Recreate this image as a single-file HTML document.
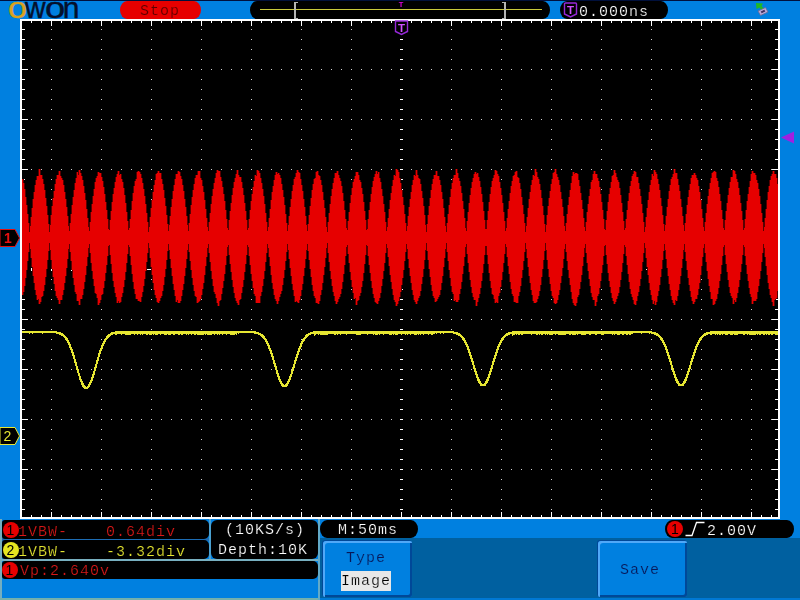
<!DOCTYPE html>
<html><head><meta charset="utf-8"><title>OWON</title>
<style>
html,body{margin:0;padding:0;}
body{width:800px;height:600px;overflow:hidden;background:#0080e0;position:relative;font-family:"Liberation Mono",monospace;font-size:15px;letter-spacing:1px;line-height:16px;}
.a{position:absolute;}
.t{position:absolute;white-space:pre;will-change:transform;-webkit-text-stroke:0.22px #000;}
.lg{position:absolute;left:0;top:-12px;white-space:nowrap;font-family:"Liberation Sans",sans-serif;font-size:30px;line-height:40px;letter-spacing:0;color:#04102c;-webkit-text-stroke:0.4px #04102c;}
.lg span{display:inline-block;transform-origin:0 0;}
.pill{position:absolute;background:#000;border-radius:7px/9px;}
.btn{position:absolute;background:#0080e0;border-radius:3px 2px 2px 2px;box-shadow:inset 2px 2px 0 #50a8f8, inset -2px -2px 0 #004898, -1px -1px 0 #004898;}
.circ{position:absolute;width:16px;height:16px;border-radius:8px;color:#000;font-family:"Liberation Sans",sans-serif;font-size:14px;line-height:16px;text-align:center;letter-spacing:0;}
</style></head><body>
<div class="a" style="left:0;top:0;width:800px;height:1px;background:#00103c"></div>
<div class="a" style="left:0;top:519px;width:2px;height:81px;background:#74aec0"></div>
<!-- logo -->
<div class="lg"><span style="margin-left:8px;width:17.3px;color:#d9a21e;-webkit-text-stroke:0.4px #d9a21e;transform:scaleX(1.14)">o</span><span style="width:20.2px;transform:scaleX(0.95)">w</span><span style="width:17.2px;transform:scaleX(1.21)">o</span><span style="width:16px">n</span></div>
<!-- stop pill -->
<div class="a" style="left:120px;top:1px;width:81px;height:18px;border-radius:7px/9px;background:#e60000"></div>
<div class="t" style="left:139.5px;top:4px;color:#5a0000;-webkit-text-stroke:0.22px #e60000">Stop</div>
<!-- memory bar -->
<div class="pill" style="left:250px;top:1px;width:300px;height:18px"></div>
<div class="a" style="left:260px;top:9px;width:282px;height:1px;background:#c8c83c"></div>
<div class="a" style="left:294px;top:2px;width:2px;height:17px;background:#b4b4b4"></div>
<div class="a" style="left:296px;top:2px;width:2px;height:1px;background:#b4b4b4"></div>
<div class="a" style="left:296px;top:18px;width:2px;height:1px;background:#b4b4b4"></div>
<div class="a" style="left:504px;top:2px;width:2px;height:17px;background:#b4b4b4"></div>
<div class="a" style="left:502px;top:2px;width:2px;height:1px;background:#b4b4b4"></div>
<div class="a" style="left:502px;top:18px;width:2px;height:1px;background:#b4b4b4"></div>
<!-- time offset pill -->
<div class="pill" style="left:560px;top:1px;width:108px;height:18px"></div>
<div class="t" style="left:579px;top:5px;color:#fff">0.000ns</div>
<!-- plot -->
<div class="a" style="left:20px;top:19px;width:756px;height:496px;border:2px solid #fff;background:#000"></div>
<svg class="a" style="left:0;top:0" width="800" height="600" viewBox="0 0 800 600" shape-rendering="crispEdges">
<rect x="51" y="29" width="1" height="1" fill="#d0d0d0"/>
<rect x="51" y="39" width="1" height="1" fill="#d0d0d0"/>
<rect x="51" y="49" width="1" height="1" fill="#d0d0d0"/>
<rect x="51" y="59" width="1" height="1" fill="#d0d0d0"/>
<rect x="51" y="69" width="1" height="1" fill="#d0d0d0"/>
<rect x="51" y="79" width="1" height="1" fill="#d0d0d0"/>
<rect x="51" y="89" width="1" height="1" fill="#d0d0d0"/>
<rect x="51" y="99" width="1" height="1" fill="#d0d0d0"/>
<rect x="51" y="109" width="1" height="1" fill="#d0d0d0"/>
<rect x="51" y="119" width="1" height="1" fill="#d0d0d0"/>
<rect x="51" y="129" width="1" height="1" fill="#d0d0d0"/>
<rect x="51" y="139" width="1" height="1" fill="#d0d0d0"/>
<rect x="51" y="149" width="1" height="1" fill="#d0d0d0"/>
<rect x="51" y="159" width="1" height="1" fill="#d0d0d0"/>
<rect x="51" y="169" width="1" height="1" fill="#d0d0d0"/>
<rect x="51" y="179" width="1" height="1" fill="#d0d0d0"/>
<rect x="51" y="189" width="1" height="1" fill="#d0d0d0"/>
<rect x="51" y="199" width="1" height="1" fill="#d0d0d0"/>
<rect x="51" y="209" width="1" height="1" fill="#d0d0d0"/>
<rect x="51" y="219" width="1" height="1" fill="#d0d0d0"/>
<rect x="51" y="229" width="1" height="1" fill="#d0d0d0"/>
<rect x="51" y="239" width="1" height="1" fill="#d0d0d0"/>
<rect x="51" y="249" width="1" height="1" fill="#d0d0d0"/>
<rect x="51" y="259" width="1" height="1" fill="#d0d0d0"/>
<rect x="51" y="269" width="1" height="1" fill="#d0d0d0"/>
<rect x="51" y="279" width="1" height="1" fill="#d0d0d0"/>
<rect x="51" y="289" width="1" height="1" fill="#d0d0d0"/>
<rect x="51" y="299" width="1" height="1" fill="#d0d0d0"/>
<rect x="51" y="309" width="1" height="1" fill="#d0d0d0"/>
<rect x="51" y="319" width="1" height="1" fill="#d0d0d0"/>
<rect x="51" y="329" width="1" height="1" fill="#d0d0d0"/>
<rect x="51" y="339" width="1" height="1" fill="#d0d0d0"/>
<rect x="51" y="349" width="1" height="1" fill="#d0d0d0"/>
<rect x="51" y="359" width="1" height="1" fill="#d0d0d0"/>
<rect x="51" y="369" width="1" height="1" fill="#d0d0d0"/>
<rect x="51" y="379" width="1" height="1" fill="#d0d0d0"/>
<rect x="51" y="389" width="1" height="1" fill="#d0d0d0"/>
<rect x="51" y="399" width="1" height="1" fill="#d0d0d0"/>
<rect x="51" y="409" width="1" height="1" fill="#d0d0d0"/>
<rect x="51" y="419" width="1" height="1" fill="#d0d0d0"/>
<rect x="51" y="429" width="1" height="1" fill="#d0d0d0"/>
<rect x="51" y="439" width="1" height="1" fill="#d0d0d0"/>
<rect x="51" y="449" width="1" height="1" fill="#d0d0d0"/>
<rect x="51" y="459" width="1" height="1" fill="#d0d0d0"/>
<rect x="51" y="469" width="1" height="1" fill="#d0d0d0"/>
<rect x="51" y="479" width="1" height="1" fill="#d0d0d0"/>
<rect x="51" y="489" width="1" height="1" fill="#d0d0d0"/>
<rect x="51" y="499" width="1" height="1" fill="#d0d0d0"/>
<rect x="51" y="509" width="1" height="1" fill="#d0d0d0"/>
<rect x="101" y="29" width="1" height="1" fill="#d0d0d0"/>
<rect x="101" y="39" width="1" height="1" fill="#d0d0d0"/>
<rect x="101" y="49" width="1" height="1" fill="#d0d0d0"/>
<rect x="101" y="59" width="1" height="1" fill="#d0d0d0"/>
<rect x="101" y="69" width="1" height="1" fill="#d0d0d0"/>
<rect x="101" y="79" width="1" height="1" fill="#d0d0d0"/>
<rect x="101" y="89" width="1" height="1" fill="#d0d0d0"/>
<rect x="101" y="99" width="1" height="1" fill="#d0d0d0"/>
<rect x="101" y="109" width="1" height="1" fill="#d0d0d0"/>
<rect x="101" y="119" width="1" height="1" fill="#d0d0d0"/>
<rect x="101" y="129" width="1" height="1" fill="#d0d0d0"/>
<rect x="101" y="139" width="1" height="1" fill="#d0d0d0"/>
<rect x="101" y="149" width="1" height="1" fill="#d0d0d0"/>
<rect x="101" y="159" width="1" height="1" fill="#d0d0d0"/>
<rect x="101" y="169" width="1" height="1" fill="#d0d0d0"/>
<rect x="101" y="179" width="1" height="1" fill="#d0d0d0"/>
<rect x="101" y="189" width="1" height="1" fill="#d0d0d0"/>
<rect x="101" y="199" width="1" height="1" fill="#d0d0d0"/>
<rect x="101" y="209" width="1" height="1" fill="#d0d0d0"/>
<rect x="101" y="219" width="1" height="1" fill="#d0d0d0"/>
<rect x="101" y="229" width="1" height="1" fill="#d0d0d0"/>
<rect x="101" y="239" width="1" height="1" fill="#d0d0d0"/>
<rect x="101" y="249" width="1" height="1" fill="#d0d0d0"/>
<rect x="101" y="259" width="1" height="1" fill="#d0d0d0"/>
<rect x="101" y="269" width="1" height="1" fill="#d0d0d0"/>
<rect x="101" y="279" width="1" height="1" fill="#d0d0d0"/>
<rect x="101" y="289" width="1" height="1" fill="#d0d0d0"/>
<rect x="101" y="299" width="1" height="1" fill="#d0d0d0"/>
<rect x="101" y="309" width="1" height="1" fill="#d0d0d0"/>
<rect x="101" y="319" width="1" height="1" fill="#d0d0d0"/>
<rect x="101" y="329" width="1" height="1" fill="#d0d0d0"/>
<rect x="101" y="339" width="1" height="1" fill="#d0d0d0"/>
<rect x="101" y="349" width="1" height="1" fill="#d0d0d0"/>
<rect x="101" y="359" width="1" height="1" fill="#d0d0d0"/>
<rect x="101" y="369" width="1" height="1" fill="#d0d0d0"/>
<rect x="101" y="379" width="1" height="1" fill="#d0d0d0"/>
<rect x="101" y="389" width="1" height="1" fill="#d0d0d0"/>
<rect x="101" y="399" width="1" height="1" fill="#d0d0d0"/>
<rect x="101" y="409" width="1" height="1" fill="#d0d0d0"/>
<rect x="101" y="419" width="1" height="1" fill="#d0d0d0"/>
<rect x="101" y="429" width="1" height="1" fill="#d0d0d0"/>
<rect x="101" y="439" width="1" height="1" fill="#d0d0d0"/>
<rect x="101" y="449" width="1" height="1" fill="#d0d0d0"/>
<rect x="101" y="459" width="1" height="1" fill="#d0d0d0"/>
<rect x="101" y="469" width="1" height="1" fill="#d0d0d0"/>
<rect x="101" y="479" width="1" height="1" fill="#d0d0d0"/>
<rect x="101" y="489" width="1" height="1" fill="#d0d0d0"/>
<rect x="101" y="499" width="1" height="1" fill="#d0d0d0"/>
<rect x="101" y="509" width="1" height="1" fill="#d0d0d0"/>
<rect x="151" y="29" width="1" height="1" fill="#d0d0d0"/>
<rect x="151" y="39" width="1" height="1" fill="#d0d0d0"/>
<rect x="151" y="49" width="1" height="1" fill="#d0d0d0"/>
<rect x="151" y="59" width="1" height="1" fill="#d0d0d0"/>
<rect x="151" y="69" width="1" height="1" fill="#d0d0d0"/>
<rect x="151" y="79" width="1" height="1" fill="#d0d0d0"/>
<rect x="151" y="89" width="1" height="1" fill="#d0d0d0"/>
<rect x="151" y="99" width="1" height="1" fill="#d0d0d0"/>
<rect x="151" y="109" width="1" height="1" fill="#d0d0d0"/>
<rect x="151" y="119" width="1" height="1" fill="#d0d0d0"/>
<rect x="151" y="129" width="1" height="1" fill="#d0d0d0"/>
<rect x="151" y="139" width="1" height="1" fill="#d0d0d0"/>
<rect x="151" y="149" width="1" height="1" fill="#d0d0d0"/>
<rect x="151" y="159" width="1" height="1" fill="#d0d0d0"/>
<rect x="151" y="169" width="1" height="1" fill="#d0d0d0"/>
<rect x="151" y="179" width="1" height="1" fill="#d0d0d0"/>
<rect x="151" y="189" width="1" height="1" fill="#d0d0d0"/>
<rect x="151" y="199" width="1" height="1" fill="#d0d0d0"/>
<rect x="151" y="209" width="1" height="1" fill="#d0d0d0"/>
<rect x="151" y="219" width="1" height="1" fill="#d0d0d0"/>
<rect x="151" y="229" width="1" height="1" fill="#d0d0d0"/>
<rect x="151" y="239" width="1" height="1" fill="#d0d0d0"/>
<rect x="151" y="249" width="1" height="1" fill="#d0d0d0"/>
<rect x="151" y="259" width="1" height="1" fill="#d0d0d0"/>
<rect x="151" y="269" width="1" height="1" fill="#d0d0d0"/>
<rect x="151" y="279" width="1" height="1" fill="#d0d0d0"/>
<rect x="151" y="289" width="1" height="1" fill="#d0d0d0"/>
<rect x="151" y="299" width="1" height="1" fill="#d0d0d0"/>
<rect x="151" y="309" width="1" height="1" fill="#d0d0d0"/>
<rect x="151" y="319" width="1" height="1" fill="#d0d0d0"/>
<rect x="151" y="329" width="1" height="1" fill="#d0d0d0"/>
<rect x="151" y="339" width="1" height="1" fill="#d0d0d0"/>
<rect x="151" y="349" width="1" height="1" fill="#d0d0d0"/>
<rect x="151" y="359" width="1" height="1" fill="#d0d0d0"/>
<rect x="151" y="369" width="1" height="1" fill="#d0d0d0"/>
<rect x="151" y="379" width="1" height="1" fill="#d0d0d0"/>
<rect x="151" y="389" width="1" height="1" fill="#d0d0d0"/>
<rect x="151" y="399" width="1" height="1" fill="#d0d0d0"/>
<rect x="151" y="409" width="1" height="1" fill="#d0d0d0"/>
<rect x="151" y="419" width="1" height="1" fill="#d0d0d0"/>
<rect x="151" y="429" width="1" height="1" fill="#d0d0d0"/>
<rect x="151" y="439" width="1" height="1" fill="#d0d0d0"/>
<rect x="151" y="449" width="1" height="1" fill="#d0d0d0"/>
<rect x="151" y="459" width="1" height="1" fill="#d0d0d0"/>
<rect x="151" y="469" width="1" height="1" fill="#d0d0d0"/>
<rect x="151" y="479" width="1" height="1" fill="#d0d0d0"/>
<rect x="151" y="489" width="1" height="1" fill="#d0d0d0"/>
<rect x="151" y="499" width="1" height="1" fill="#d0d0d0"/>
<rect x="151" y="509" width="1" height="1" fill="#d0d0d0"/>
<rect x="201" y="29" width="1" height="1" fill="#d0d0d0"/>
<rect x="201" y="39" width="1" height="1" fill="#d0d0d0"/>
<rect x="201" y="49" width="1" height="1" fill="#d0d0d0"/>
<rect x="201" y="59" width="1" height="1" fill="#d0d0d0"/>
<rect x="201" y="69" width="1" height="1" fill="#d0d0d0"/>
<rect x="201" y="79" width="1" height="1" fill="#d0d0d0"/>
<rect x="201" y="89" width="1" height="1" fill="#d0d0d0"/>
<rect x="201" y="99" width="1" height="1" fill="#d0d0d0"/>
<rect x="201" y="109" width="1" height="1" fill="#d0d0d0"/>
<rect x="201" y="119" width="1" height="1" fill="#d0d0d0"/>
<rect x="201" y="129" width="1" height="1" fill="#d0d0d0"/>
<rect x="201" y="139" width="1" height="1" fill="#d0d0d0"/>
<rect x="201" y="149" width="1" height="1" fill="#d0d0d0"/>
<rect x="201" y="159" width="1" height="1" fill="#d0d0d0"/>
<rect x="201" y="169" width="1" height="1" fill="#d0d0d0"/>
<rect x="201" y="179" width="1" height="1" fill="#d0d0d0"/>
<rect x="201" y="189" width="1" height="1" fill="#d0d0d0"/>
<rect x="201" y="199" width="1" height="1" fill="#d0d0d0"/>
<rect x="201" y="209" width="1" height="1" fill="#d0d0d0"/>
<rect x="201" y="219" width="1" height="1" fill="#d0d0d0"/>
<rect x="201" y="229" width="1" height="1" fill="#d0d0d0"/>
<rect x="201" y="239" width="1" height="1" fill="#d0d0d0"/>
<rect x="201" y="249" width="1" height="1" fill="#d0d0d0"/>
<rect x="201" y="259" width="1" height="1" fill="#d0d0d0"/>
<rect x="201" y="269" width="1" height="1" fill="#d0d0d0"/>
<rect x="201" y="279" width="1" height="1" fill="#d0d0d0"/>
<rect x="201" y="289" width="1" height="1" fill="#d0d0d0"/>
<rect x="201" y="299" width="1" height="1" fill="#d0d0d0"/>
<rect x="201" y="309" width="1" height="1" fill="#d0d0d0"/>
<rect x="201" y="319" width="1" height="1" fill="#d0d0d0"/>
<rect x="201" y="329" width="1" height="1" fill="#d0d0d0"/>
<rect x="201" y="339" width="1" height="1" fill="#d0d0d0"/>
<rect x="201" y="349" width="1" height="1" fill="#d0d0d0"/>
<rect x="201" y="359" width="1" height="1" fill="#d0d0d0"/>
<rect x="201" y="369" width="1" height="1" fill="#d0d0d0"/>
<rect x="201" y="379" width="1" height="1" fill="#d0d0d0"/>
<rect x="201" y="389" width="1" height="1" fill="#d0d0d0"/>
<rect x="201" y="399" width="1" height="1" fill="#d0d0d0"/>
<rect x="201" y="409" width="1" height="1" fill="#d0d0d0"/>
<rect x="201" y="419" width="1" height="1" fill="#d0d0d0"/>
<rect x="201" y="429" width="1" height="1" fill="#d0d0d0"/>
<rect x="201" y="439" width="1" height="1" fill="#d0d0d0"/>
<rect x="201" y="449" width="1" height="1" fill="#d0d0d0"/>
<rect x="201" y="459" width="1" height="1" fill="#d0d0d0"/>
<rect x="201" y="469" width="1" height="1" fill="#d0d0d0"/>
<rect x="201" y="479" width="1" height="1" fill="#d0d0d0"/>
<rect x="201" y="489" width="1" height="1" fill="#d0d0d0"/>
<rect x="201" y="499" width="1" height="1" fill="#d0d0d0"/>
<rect x="201" y="509" width="1" height="1" fill="#d0d0d0"/>
<rect x="251" y="29" width="1" height="1" fill="#d0d0d0"/>
<rect x="251" y="39" width="1" height="1" fill="#d0d0d0"/>
<rect x="251" y="49" width="1" height="1" fill="#d0d0d0"/>
<rect x="251" y="59" width="1" height="1" fill="#d0d0d0"/>
<rect x="251" y="69" width="1" height="1" fill="#d0d0d0"/>
<rect x="251" y="79" width="1" height="1" fill="#d0d0d0"/>
<rect x="251" y="89" width="1" height="1" fill="#d0d0d0"/>
<rect x="251" y="99" width="1" height="1" fill="#d0d0d0"/>
<rect x="251" y="109" width="1" height="1" fill="#d0d0d0"/>
<rect x="251" y="119" width="1" height="1" fill="#d0d0d0"/>
<rect x="251" y="129" width="1" height="1" fill="#d0d0d0"/>
<rect x="251" y="139" width="1" height="1" fill="#d0d0d0"/>
<rect x="251" y="149" width="1" height="1" fill="#d0d0d0"/>
<rect x="251" y="159" width="1" height="1" fill="#d0d0d0"/>
<rect x="251" y="169" width="1" height="1" fill="#d0d0d0"/>
<rect x="251" y="179" width="1" height="1" fill="#d0d0d0"/>
<rect x="251" y="189" width="1" height="1" fill="#d0d0d0"/>
<rect x="251" y="199" width="1" height="1" fill="#d0d0d0"/>
<rect x="251" y="209" width="1" height="1" fill="#d0d0d0"/>
<rect x="251" y="219" width="1" height="1" fill="#d0d0d0"/>
<rect x="251" y="229" width="1" height="1" fill="#d0d0d0"/>
<rect x="251" y="239" width="1" height="1" fill="#d0d0d0"/>
<rect x="251" y="249" width="1" height="1" fill="#d0d0d0"/>
<rect x="251" y="259" width="1" height="1" fill="#d0d0d0"/>
<rect x="251" y="269" width="1" height="1" fill="#d0d0d0"/>
<rect x="251" y="279" width="1" height="1" fill="#d0d0d0"/>
<rect x="251" y="289" width="1" height="1" fill="#d0d0d0"/>
<rect x="251" y="299" width="1" height="1" fill="#d0d0d0"/>
<rect x="251" y="309" width="1" height="1" fill="#d0d0d0"/>
<rect x="251" y="319" width="1" height="1" fill="#d0d0d0"/>
<rect x="251" y="329" width="1" height="1" fill="#d0d0d0"/>
<rect x="251" y="339" width="1" height="1" fill="#d0d0d0"/>
<rect x="251" y="349" width="1" height="1" fill="#d0d0d0"/>
<rect x="251" y="359" width="1" height="1" fill="#d0d0d0"/>
<rect x="251" y="369" width="1" height="1" fill="#d0d0d0"/>
<rect x="251" y="379" width="1" height="1" fill="#d0d0d0"/>
<rect x="251" y="389" width="1" height="1" fill="#d0d0d0"/>
<rect x="251" y="399" width="1" height="1" fill="#d0d0d0"/>
<rect x="251" y="409" width="1" height="1" fill="#d0d0d0"/>
<rect x="251" y="419" width="1" height="1" fill="#d0d0d0"/>
<rect x="251" y="429" width="1" height="1" fill="#d0d0d0"/>
<rect x="251" y="439" width="1" height="1" fill="#d0d0d0"/>
<rect x="251" y="449" width="1" height="1" fill="#d0d0d0"/>
<rect x="251" y="459" width="1" height="1" fill="#d0d0d0"/>
<rect x="251" y="469" width="1" height="1" fill="#d0d0d0"/>
<rect x="251" y="479" width="1" height="1" fill="#d0d0d0"/>
<rect x="251" y="489" width="1" height="1" fill="#d0d0d0"/>
<rect x="251" y="499" width="1" height="1" fill="#d0d0d0"/>
<rect x="251" y="509" width="1" height="1" fill="#d0d0d0"/>
<rect x="301" y="29" width="1" height="1" fill="#d0d0d0"/>
<rect x="301" y="39" width="1" height="1" fill="#d0d0d0"/>
<rect x="301" y="49" width="1" height="1" fill="#d0d0d0"/>
<rect x="301" y="59" width="1" height="1" fill="#d0d0d0"/>
<rect x="301" y="69" width="1" height="1" fill="#d0d0d0"/>
<rect x="301" y="79" width="1" height="1" fill="#d0d0d0"/>
<rect x="301" y="89" width="1" height="1" fill="#d0d0d0"/>
<rect x="301" y="99" width="1" height="1" fill="#d0d0d0"/>
<rect x="301" y="109" width="1" height="1" fill="#d0d0d0"/>
<rect x="301" y="119" width="1" height="1" fill="#d0d0d0"/>
<rect x="301" y="129" width="1" height="1" fill="#d0d0d0"/>
<rect x="301" y="139" width="1" height="1" fill="#d0d0d0"/>
<rect x="301" y="149" width="1" height="1" fill="#d0d0d0"/>
<rect x="301" y="159" width="1" height="1" fill="#d0d0d0"/>
<rect x="301" y="169" width="1" height="1" fill="#d0d0d0"/>
<rect x="301" y="179" width="1" height="1" fill="#d0d0d0"/>
<rect x="301" y="189" width="1" height="1" fill="#d0d0d0"/>
<rect x="301" y="199" width="1" height="1" fill="#d0d0d0"/>
<rect x="301" y="209" width="1" height="1" fill="#d0d0d0"/>
<rect x="301" y="219" width="1" height="1" fill="#d0d0d0"/>
<rect x="301" y="229" width="1" height="1" fill="#d0d0d0"/>
<rect x="301" y="239" width="1" height="1" fill="#d0d0d0"/>
<rect x="301" y="249" width="1" height="1" fill="#d0d0d0"/>
<rect x="301" y="259" width="1" height="1" fill="#d0d0d0"/>
<rect x="301" y="269" width="1" height="1" fill="#d0d0d0"/>
<rect x="301" y="279" width="1" height="1" fill="#d0d0d0"/>
<rect x="301" y="289" width="1" height="1" fill="#d0d0d0"/>
<rect x="301" y="299" width="1" height="1" fill="#d0d0d0"/>
<rect x="301" y="309" width="1" height="1" fill="#d0d0d0"/>
<rect x="301" y="319" width="1" height="1" fill="#d0d0d0"/>
<rect x="301" y="329" width="1" height="1" fill="#d0d0d0"/>
<rect x="301" y="339" width="1" height="1" fill="#d0d0d0"/>
<rect x="301" y="349" width="1" height="1" fill="#d0d0d0"/>
<rect x="301" y="359" width="1" height="1" fill="#d0d0d0"/>
<rect x="301" y="369" width="1" height="1" fill="#d0d0d0"/>
<rect x="301" y="379" width="1" height="1" fill="#d0d0d0"/>
<rect x="301" y="389" width="1" height="1" fill="#d0d0d0"/>
<rect x="301" y="399" width="1" height="1" fill="#d0d0d0"/>
<rect x="301" y="409" width="1" height="1" fill="#d0d0d0"/>
<rect x="301" y="419" width="1" height="1" fill="#d0d0d0"/>
<rect x="301" y="429" width="1" height="1" fill="#d0d0d0"/>
<rect x="301" y="439" width="1" height="1" fill="#d0d0d0"/>
<rect x="301" y="449" width="1" height="1" fill="#d0d0d0"/>
<rect x="301" y="459" width="1" height="1" fill="#d0d0d0"/>
<rect x="301" y="469" width="1" height="1" fill="#d0d0d0"/>
<rect x="301" y="479" width="1" height="1" fill="#d0d0d0"/>
<rect x="301" y="489" width="1" height="1" fill="#d0d0d0"/>
<rect x="301" y="499" width="1" height="1" fill="#d0d0d0"/>
<rect x="301" y="509" width="1" height="1" fill="#d0d0d0"/>
<rect x="351" y="29" width="1" height="1" fill="#d0d0d0"/>
<rect x="351" y="39" width="1" height="1" fill="#d0d0d0"/>
<rect x="351" y="49" width="1" height="1" fill="#d0d0d0"/>
<rect x="351" y="59" width="1" height="1" fill="#d0d0d0"/>
<rect x="351" y="69" width="1" height="1" fill="#d0d0d0"/>
<rect x="351" y="79" width="1" height="1" fill="#d0d0d0"/>
<rect x="351" y="89" width="1" height="1" fill="#d0d0d0"/>
<rect x="351" y="99" width="1" height="1" fill="#d0d0d0"/>
<rect x="351" y="109" width="1" height="1" fill="#d0d0d0"/>
<rect x="351" y="119" width="1" height="1" fill="#d0d0d0"/>
<rect x="351" y="129" width="1" height="1" fill="#d0d0d0"/>
<rect x="351" y="139" width="1" height="1" fill="#d0d0d0"/>
<rect x="351" y="149" width="1" height="1" fill="#d0d0d0"/>
<rect x="351" y="159" width="1" height="1" fill="#d0d0d0"/>
<rect x="351" y="169" width="1" height="1" fill="#d0d0d0"/>
<rect x="351" y="179" width="1" height="1" fill="#d0d0d0"/>
<rect x="351" y="189" width="1" height="1" fill="#d0d0d0"/>
<rect x="351" y="199" width="1" height="1" fill="#d0d0d0"/>
<rect x="351" y="209" width="1" height="1" fill="#d0d0d0"/>
<rect x="351" y="219" width="1" height="1" fill="#d0d0d0"/>
<rect x="351" y="229" width="1" height="1" fill="#d0d0d0"/>
<rect x="351" y="239" width="1" height="1" fill="#d0d0d0"/>
<rect x="351" y="249" width="1" height="1" fill="#d0d0d0"/>
<rect x="351" y="259" width="1" height="1" fill="#d0d0d0"/>
<rect x="351" y="269" width="1" height="1" fill="#d0d0d0"/>
<rect x="351" y="279" width="1" height="1" fill="#d0d0d0"/>
<rect x="351" y="289" width="1" height="1" fill="#d0d0d0"/>
<rect x="351" y="299" width="1" height="1" fill="#d0d0d0"/>
<rect x="351" y="309" width="1" height="1" fill="#d0d0d0"/>
<rect x="351" y="319" width="1" height="1" fill="#d0d0d0"/>
<rect x="351" y="329" width="1" height="1" fill="#d0d0d0"/>
<rect x="351" y="339" width="1" height="1" fill="#d0d0d0"/>
<rect x="351" y="349" width="1" height="1" fill="#d0d0d0"/>
<rect x="351" y="359" width="1" height="1" fill="#d0d0d0"/>
<rect x="351" y="369" width="1" height="1" fill="#d0d0d0"/>
<rect x="351" y="379" width="1" height="1" fill="#d0d0d0"/>
<rect x="351" y="389" width="1" height="1" fill="#d0d0d0"/>
<rect x="351" y="399" width="1" height="1" fill="#d0d0d0"/>
<rect x="351" y="409" width="1" height="1" fill="#d0d0d0"/>
<rect x="351" y="419" width="1" height="1" fill="#d0d0d0"/>
<rect x="351" y="429" width="1" height="1" fill="#d0d0d0"/>
<rect x="351" y="439" width="1" height="1" fill="#d0d0d0"/>
<rect x="351" y="449" width="1" height="1" fill="#d0d0d0"/>
<rect x="351" y="459" width="1" height="1" fill="#d0d0d0"/>
<rect x="351" y="469" width="1" height="1" fill="#d0d0d0"/>
<rect x="351" y="479" width="1" height="1" fill="#d0d0d0"/>
<rect x="351" y="489" width="1" height="1" fill="#d0d0d0"/>
<rect x="351" y="499" width="1" height="1" fill="#d0d0d0"/>
<rect x="351" y="509" width="1" height="1" fill="#d0d0d0"/>
<rect x="451" y="29" width="1" height="1" fill="#d0d0d0"/>
<rect x="451" y="39" width="1" height="1" fill="#d0d0d0"/>
<rect x="451" y="49" width="1" height="1" fill="#d0d0d0"/>
<rect x="451" y="59" width="1" height="1" fill="#d0d0d0"/>
<rect x="451" y="69" width="1" height="1" fill="#d0d0d0"/>
<rect x="451" y="79" width="1" height="1" fill="#d0d0d0"/>
<rect x="451" y="89" width="1" height="1" fill="#d0d0d0"/>
<rect x="451" y="99" width="1" height="1" fill="#d0d0d0"/>
<rect x="451" y="109" width="1" height="1" fill="#d0d0d0"/>
<rect x="451" y="119" width="1" height="1" fill="#d0d0d0"/>
<rect x="451" y="129" width="1" height="1" fill="#d0d0d0"/>
<rect x="451" y="139" width="1" height="1" fill="#d0d0d0"/>
<rect x="451" y="149" width="1" height="1" fill="#d0d0d0"/>
<rect x="451" y="159" width="1" height="1" fill="#d0d0d0"/>
<rect x="451" y="169" width="1" height="1" fill="#d0d0d0"/>
<rect x="451" y="179" width="1" height="1" fill="#d0d0d0"/>
<rect x="451" y="189" width="1" height="1" fill="#d0d0d0"/>
<rect x="451" y="199" width="1" height="1" fill="#d0d0d0"/>
<rect x="451" y="209" width="1" height="1" fill="#d0d0d0"/>
<rect x="451" y="219" width="1" height="1" fill="#d0d0d0"/>
<rect x="451" y="229" width="1" height="1" fill="#d0d0d0"/>
<rect x="451" y="239" width="1" height="1" fill="#d0d0d0"/>
<rect x="451" y="249" width="1" height="1" fill="#d0d0d0"/>
<rect x="451" y="259" width="1" height="1" fill="#d0d0d0"/>
<rect x="451" y="269" width="1" height="1" fill="#d0d0d0"/>
<rect x="451" y="279" width="1" height="1" fill="#d0d0d0"/>
<rect x="451" y="289" width="1" height="1" fill="#d0d0d0"/>
<rect x="451" y="299" width="1" height="1" fill="#d0d0d0"/>
<rect x="451" y="309" width="1" height="1" fill="#d0d0d0"/>
<rect x="451" y="319" width="1" height="1" fill="#d0d0d0"/>
<rect x="451" y="329" width="1" height="1" fill="#d0d0d0"/>
<rect x="451" y="339" width="1" height="1" fill="#d0d0d0"/>
<rect x="451" y="349" width="1" height="1" fill="#d0d0d0"/>
<rect x="451" y="359" width="1" height="1" fill="#d0d0d0"/>
<rect x="451" y="369" width="1" height="1" fill="#d0d0d0"/>
<rect x="451" y="379" width="1" height="1" fill="#d0d0d0"/>
<rect x="451" y="389" width="1" height="1" fill="#d0d0d0"/>
<rect x="451" y="399" width="1" height="1" fill="#d0d0d0"/>
<rect x="451" y="409" width="1" height="1" fill="#d0d0d0"/>
<rect x="451" y="419" width="1" height="1" fill="#d0d0d0"/>
<rect x="451" y="429" width="1" height="1" fill="#d0d0d0"/>
<rect x="451" y="439" width="1" height="1" fill="#d0d0d0"/>
<rect x="451" y="449" width="1" height="1" fill="#d0d0d0"/>
<rect x="451" y="459" width="1" height="1" fill="#d0d0d0"/>
<rect x="451" y="469" width="1" height="1" fill="#d0d0d0"/>
<rect x="451" y="479" width="1" height="1" fill="#d0d0d0"/>
<rect x="451" y="489" width="1" height="1" fill="#d0d0d0"/>
<rect x="451" y="499" width="1" height="1" fill="#d0d0d0"/>
<rect x="451" y="509" width="1" height="1" fill="#d0d0d0"/>
<rect x="501" y="29" width="1" height="1" fill="#d0d0d0"/>
<rect x="501" y="39" width="1" height="1" fill="#d0d0d0"/>
<rect x="501" y="49" width="1" height="1" fill="#d0d0d0"/>
<rect x="501" y="59" width="1" height="1" fill="#d0d0d0"/>
<rect x="501" y="69" width="1" height="1" fill="#d0d0d0"/>
<rect x="501" y="79" width="1" height="1" fill="#d0d0d0"/>
<rect x="501" y="89" width="1" height="1" fill="#d0d0d0"/>
<rect x="501" y="99" width="1" height="1" fill="#d0d0d0"/>
<rect x="501" y="109" width="1" height="1" fill="#d0d0d0"/>
<rect x="501" y="119" width="1" height="1" fill="#d0d0d0"/>
<rect x="501" y="129" width="1" height="1" fill="#d0d0d0"/>
<rect x="501" y="139" width="1" height="1" fill="#d0d0d0"/>
<rect x="501" y="149" width="1" height="1" fill="#d0d0d0"/>
<rect x="501" y="159" width="1" height="1" fill="#d0d0d0"/>
<rect x="501" y="169" width="1" height="1" fill="#d0d0d0"/>
<rect x="501" y="179" width="1" height="1" fill="#d0d0d0"/>
<rect x="501" y="189" width="1" height="1" fill="#d0d0d0"/>
<rect x="501" y="199" width="1" height="1" fill="#d0d0d0"/>
<rect x="501" y="209" width="1" height="1" fill="#d0d0d0"/>
<rect x="501" y="219" width="1" height="1" fill="#d0d0d0"/>
<rect x="501" y="229" width="1" height="1" fill="#d0d0d0"/>
<rect x="501" y="239" width="1" height="1" fill="#d0d0d0"/>
<rect x="501" y="249" width="1" height="1" fill="#d0d0d0"/>
<rect x="501" y="259" width="1" height="1" fill="#d0d0d0"/>
<rect x="501" y="269" width="1" height="1" fill="#d0d0d0"/>
<rect x="501" y="279" width="1" height="1" fill="#d0d0d0"/>
<rect x="501" y="289" width="1" height="1" fill="#d0d0d0"/>
<rect x="501" y="299" width="1" height="1" fill="#d0d0d0"/>
<rect x="501" y="309" width="1" height="1" fill="#d0d0d0"/>
<rect x="501" y="319" width="1" height="1" fill="#d0d0d0"/>
<rect x="501" y="329" width="1" height="1" fill="#d0d0d0"/>
<rect x="501" y="339" width="1" height="1" fill="#d0d0d0"/>
<rect x="501" y="349" width="1" height="1" fill="#d0d0d0"/>
<rect x="501" y="359" width="1" height="1" fill="#d0d0d0"/>
<rect x="501" y="369" width="1" height="1" fill="#d0d0d0"/>
<rect x="501" y="379" width="1" height="1" fill="#d0d0d0"/>
<rect x="501" y="389" width="1" height="1" fill="#d0d0d0"/>
<rect x="501" y="399" width="1" height="1" fill="#d0d0d0"/>
<rect x="501" y="409" width="1" height="1" fill="#d0d0d0"/>
<rect x="501" y="419" width="1" height="1" fill="#d0d0d0"/>
<rect x="501" y="429" width="1" height="1" fill="#d0d0d0"/>
<rect x="501" y="439" width="1" height="1" fill="#d0d0d0"/>
<rect x="501" y="449" width="1" height="1" fill="#d0d0d0"/>
<rect x="501" y="459" width="1" height="1" fill="#d0d0d0"/>
<rect x="501" y="469" width="1" height="1" fill="#d0d0d0"/>
<rect x="501" y="479" width="1" height="1" fill="#d0d0d0"/>
<rect x="501" y="489" width="1" height="1" fill="#d0d0d0"/>
<rect x="501" y="499" width="1" height="1" fill="#d0d0d0"/>
<rect x="501" y="509" width="1" height="1" fill="#d0d0d0"/>
<rect x="551" y="29" width="1" height="1" fill="#d0d0d0"/>
<rect x="551" y="39" width="1" height="1" fill="#d0d0d0"/>
<rect x="551" y="49" width="1" height="1" fill="#d0d0d0"/>
<rect x="551" y="59" width="1" height="1" fill="#d0d0d0"/>
<rect x="551" y="69" width="1" height="1" fill="#d0d0d0"/>
<rect x="551" y="79" width="1" height="1" fill="#d0d0d0"/>
<rect x="551" y="89" width="1" height="1" fill="#d0d0d0"/>
<rect x="551" y="99" width="1" height="1" fill="#d0d0d0"/>
<rect x="551" y="109" width="1" height="1" fill="#d0d0d0"/>
<rect x="551" y="119" width="1" height="1" fill="#d0d0d0"/>
<rect x="551" y="129" width="1" height="1" fill="#d0d0d0"/>
<rect x="551" y="139" width="1" height="1" fill="#d0d0d0"/>
<rect x="551" y="149" width="1" height="1" fill="#d0d0d0"/>
<rect x="551" y="159" width="1" height="1" fill="#d0d0d0"/>
<rect x="551" y="169" width="1" height="1" fill="#d0d0d0"/>
<rect x="551" y="179" width="1" height="1" fill="#d0d0d0"/>
<rect x="551" y="189" width="1" height="1" fill="#d0d0d0"/>
<rect x="551" y="199" width="1" height="1" fill="#d0d0d0"/>
<rect x="551" y="209" width="1" height="1" fill="#d0d0d0"/>
<rect x="551" y="219" width="1" height="1" fill="#d0d0d0"/>
<rect x="551" y="229" width="1" height="1" fill="#d0d0d0"/>
<rect x="551" y="239" width="1" height="1" fill="#d0d0d0"/>
<rect x="551" y="249" width="1" height="1" fill="#d0d0d0"/>
<rect x="551" y="259" width="1" height="1" fill="#d0d0d0"/>
<rect x="551" y="269" width="1" height="1" fill="#d0d0d0"/>
<rect x="551" y="279" width="1" height="1" fill="#d0d0d0"/>
<rect x="551" y="289" width="1" height="1" fill="#d0d0d0"/>
<rect x="551" y="299" width="1" height="1" fill="#d0d0d0"/>
<rect x="551" y="309" width="1" height="1" fill="#d0d0d0"/>
<rect x="551" y="319" width="1" height="1" fill="#d0d0d0"/>
<rect x="551" y="329" width="1" height="1" fill="#d0d0d0"/>
<rect x="551" y="339" width="1" height="1" fill="#d0d0d0"/>
<rect x="551" y="349" width="1" height="1" fill="#d0d0d0"/>
<rect x="551" y="359" width="1" height="1" fill="#d0d0d0"/>
<rect x="551" y="369" width="1" height="1" fill="#d0d0d0"/>
<rect x="551" y="379" width="1" height="1" fill="#d0d0d0"/>
<rect x="551" y="389" width="1" height="1" fill="#d0d0d0"/>
<rect x="551" y="399" width="1" height="1" fill="#d0d0d0"/>
<rect x="551" y="409" width="1" height="1" fill="#d0d0d0"/>
<rect x="551" y="419" width="1" height="1" fill="#d0d0d0"/>
<rect x="551" y="429" width="1" height="1" fill="#d0d0d0"/>
<rect x="551" y="439" width="1" height="1" fill="#d0d0d0"/>
<rect x="551" y="449" width="1" height="1" fill="#d0d0d0"/>
<rect x="551" y="459" width="1" height="1" fill="#d0d0d0"/>
<rect x="551" y="469" width="1" height="1" fill="#d0d0d0"/>
<rect x="551" y="479" width="1" height="1" fill="#d0d0d0"/>
<rect x="551" y="489" width="1" height="1" fill="#d0d0d0"/>
<rect x="551" y="499" width="1" height="1" fill="#d0d0d0"/>
<rect x="551" y="509" width="1" height="1" fill="#d0d0d0"/>
<rect x="601" y="29" width="1" height="1" fill="#d0d0d0"/>
<rect x="601" y="39" width="1" height="1" fill="#d0d0d0"/>
<rect x="601" y="49" width="1" height="1" fill="#d0d0d0"/>
<rect x="601" y="59" width="1" height="1" fill="#d0d0d0"/>
<rect x="601" y="69" width="1" height="1" fill="#d0d0d0"/>
<rect x="601" y="79" width="1" height="1" fill="#d0d0d0"/>
<rect x="601" y="89" width="1" height="1" fill="#d0d0d0"/>
<rect x="601" y="99" width="1" height="1" fill="#d0d0d0"/>
<rect x="601" y="109" width="1" height="1" fill="#d0d0d0"/>
<rect x="601" y="119" width="1" height="1" fill="#d0d0d0"/>
<rect x="601" y="129" width="1" height="1" fill="#d0d0d0"/>
<rect x="601" y="139" width="1" height="1" fill="#d0d0d0"/>
<rect x="601" y="149" width="1" height="1" fill="#d0d0d0"/>
<rect x="601" y="159" width="1" height="1" fill="#d0d0d0"/>
<rect x="601" y="169" width="1" height="1" fill="#d0d0d0"/>
<rect x="601" y="179" width="1" height="1" fill="#d0d0d0"/>
<rect x="601" y="189" width="1" height="1" fill="#d0d0d0"/>
<rect x="601" y="199" width="1" height="1" fill="#d0d0d0"/>
<rect x="601" y="209" width="1" height="1" fill="#d0d0d0"/>
<rect x="601" y="219" width="1" height="1" fill="#d0d0d0"/>
<rect x="601" y="229" width="1" height="1" fill="#d0d0d0"/>
<rect x="601" y="239" width="1" height="1" fill="#d0d0d0"/>
<rect x="601" y="249" width="1" height="1" fill="#d0d0d0"/>
<rect x="601" y="259" width="1" height="1" fill="#d0d0d0"/>
<rect x="601" y="269" width="1" height="1" fill="#d0d0d0"/>
<rect x="601" y="279" width="1" height="1" fill="#d0d0d0"/>
<rect x="601" y="289" width="1" height="1" fill="#d0d0d0"/>
<rect x="601" y="299" width="1" height="1" fill="#d0d0d0"/>
<rect x="601" y="309" width="1" height="1" fill="#d0d0d0"/>
<rect x="601" y="319" width="1" height="1" fill="#d0d0d0"/>
<rect x="601" y="329" width="1" height="1" fill="#d0d0d0"/>
<rect x="601" y="339" width="1" height="1" fill="#d0d0d0"/>
<rect x="601" y="349" width="1" height="1" fill="#d0d0d0"/>
<rect x="601" y="359" width="1" height="1" fill="#d0d0d0"/>
<rect x="601" y="369" width="1" height="1" fill="#d0d0d0"/>
<rect x="601" y="379" width="1" height="1" fill="#d0d0d0"/>
<rect x="601" y="389" width="1" height="1" fill="#d0d0d0"/>
<rect x="601" y="399" width="1" height="1" fill="#d0d0d0"/>
<rect x="601" y="409" width="1" height="1" fill="#d0d0d0"/>
<rect x="601" y="419" width="1" height="1" fill="#d0d0d0"/>
<rect x="601" y="429" width="1" height="1" fill="#d0d0d0"/>
<rect x="601" y="439" width="1" height="1" fill="#d0d0d0"/>
<rect x="601" y="449" width="1" height="1" fill="#d0d0d0"/>
<rect x="601" y="459" width="1" height="1" fill="#d0d0d0"/>
<rect x="601" y="469" width="1" height="1" fill="#d0d0d0"/>
<rect x="601" y="479" width="1" height="1" fill="#d0d0d0"/>
<rect x="601" y="489" width="1" height="1" fill="#d0d0d0"/>
<rect x="601" y="499" width="1" height="1" fill="#d0d0d0"/>
<rect x="601" y="509" width="1" height="1" fill="#d0d0d0"/>
<rect x="651" y="29" width="1" height="1" fill="#d0d0d0"/>
<rect x="651" y="39" width="1" height="1" fill="#d0d0d0"/>
<rect x="651" y="49" width="1" height="1" fill="#d0d0d0"/>
<rect x="651" y="59" width="1" height="1" fill="#d0d0d0"/>
<rect x="651" y="69" width="1" height="1" fill="#d0d0d0"/>
<rect x="651" y="79" width="1" height="1" fill="#d0d0d0"/>
<rect x="651" y="89" width="1" height="1" fill="#d0d0d0"/>
<rect x="651" y="99" width="1" height="1" fill="#d0d0d0"/>
<rect x="651" y="109" width="1" height="1" fill="#d0d0d0"/>
<rect x="651" y="119" width="1" height="1" fill="#d0d0d0"/>
<rect x="651" y="129" width="1" height="1" fill="#d0d0d0"/>
<rect x="651" y="139" width="1" height="1" fill="#d0d0d0"/>
<rect x="651" y="149" width="1" height="1" fill="#d0d0d0"/>
<rect x="651" y="159" width="1" height="1" fill="#d0d0d0"/>
<rect x="651" y="169" width="1" height="1" fill="#d0d0d0"/>
<rect x="651" y="179" width="1" height="1" fill="#d0d0d0"/>
<rect x="651" y="189" width="1" height="1" fill="#d0d0d0"/>
<rect x="651" y="199" width="1" height="1" fill="#d0d0d0"/>
<rect x="651" y="209" width="1" height="1" fill="#d0d0d0"/>
<rect x="651" y="219" width="1" height="1" fill="#d0d0d0"/>
<rect x="651" y="229" width="1" height="1" fill="#d0d0d0"/>
<rect x="651" y="239" width="1" height="1" fill="#d0d0d0"/>
<rect x="651" y="249" width="1" height="1" fill="#d0d0d0"/>
<rect x="651" y="259" width="1" height="1" fill="#d0d0d0"/>
<rect x="651" y="269" width="1" height="1" fill="#d0d0d0"/>
<rect x="651" y="279" width="1" height="1" fill="#d0d0d0"/>
<rect x="651" y="289" width="1" height="1" fill="#d0d0d0"/>
<rect x="651" y="299" width="1" height="1" fill="#d0d0d0"/>
<rect x="651" y="309" width="1" height="1" fill="#d0d0d0"/>
<rect x="651" y="319" width="1" height="1" fill="#d0d0d0"/>
<rect x="651" y="329" width="1" height="1" fill="#d0d0d0"/>
<rect x="651" y="339" width="1" height="1" fill="#d0d0d0"/>
<rect x="651" y="349" width="1" height="1" fill="#d0d0d0"/>
<rect x="651" y="359" width="1" height="1" fill="#d0d0d0"/>
<rect x="651" y="369" width="1" height="1" fill="#d0d0d0"/>
<rect x="651" y="379" width="1" height="1" fill="#d0d0d0"/>
<rect x="651" y="389" width="1" height="1" fill="#d0d0d0"/>
<rect x="651" y="399" width="1" height="1" fill="#d0d0d0"/>
<rect x="651" y="409" width="1" height="1" fill="#d0d0d0"/>
<rect x="651" y="419" width="1" height="1" fill="#d0d0d0"/>
<rect x="651" y="429" width="1" height="1" fill="#d0d0d0"/>
<rect x="651" y="439" width="1" height="1" fill="#d0d0d0"/>
<rect x="651" y="449" width="1" height="1" fill="#d0d0d0"/>
<rect x="651" y="459" width="1" height="1" fill="#d0d0d0"/>
<rect x="651" y="469" width="1" height="1" fill="#d0d0d0"/>
<rect x="651" y="479" width="1" height="1" fill="#d0d0d0"/>
<rect x="651" y="489" width="1" height="1" fill="#d0d0d0"/>
<rect x="651" y="499" width="1" height="1" fill="#d0d0d0"/>
<rect x="651" y="509" width="1" height="1" fill="#d0d0d0"/>
<rect x="701" y="29" width="1" height="1" fill="#d0d0d0"/>
<rect x="701" y="39" width="1" height="1" fill="#d0d0d0"/>
<rect x="701" y="49" width="1" height="1" fill="#d0d0d0"/>
<rect x="701" y="59" width="1" height="1" fill="#d0d0d0"/>
<rect x="701" y="69" width="1" height="1" fill="#d0d0d0"/>
<rect x="701" y="79" width="1" height="1" fill="#d0d0d0"/>
<rect x="701" y="89" width="1" height="1" fill="#d0d0d0"/>
<rect x="701" y="99" width="1" height="1" fill="#d0d0d0"/>
<rect x="701" y="109" width="1" height="1" fill="#d0d0d0"/>
<rect x="701" y="119" width="1" height="1" fill="#d0d0d0"/>
<rect x="701" y="129" width="1" height="1" fill="#d0d0d0"/>
<rect x="701" y="139" width="1" height="1" fill="#d0d0d0"/>
<rect x="701" y="149" width="1" height="1" fill="#d0d0d0"/>
<rect x="701" y="159" width="1" height="1" fill="#d0d0d0"/>
<rect x="701" y="169" width="1" height="1" fill="#d0d0d0"/>
<rect x="701" y="179" width="1" height="1" fill="#d0d0d0"/>
<rect x="701" y="189" width="1" height="1" fill="#d0d0d0"/>
<rect x="701" y="199" width="1" height="1" fill="#d0d0d0"/>
<rect x="701" y="209" width="1" height="1" fill="#d0d0d0"/>
<rect x="701" y="219" width="1" height="1" fill="#d0d0d0"/>
<rect x="701" y="229" width="1" height="1" fill="#d0d0d0"/>
<rect x="701" y="239" width="1" height="1" fill="#d0d0d0"/>
<rect x="701" y="249" width="1" height="1" fill="#d0d0d0"/>
<rect x="701" y="259" width="1" height="1" fill="#d0d0d0"/>
<rect x="701" y="269" width="1" height="1" fill="#d0d0d0"/>
<rect x="701" y="279" width="1" height="1" fill="#d0d0d0"/>
<rect x="701" y="289" width="1" height="1" fill="#d0d0d0"/>
<rect x="701" y="299" width="1" height="1" fill="#d0d0d0"/>
<rect x="701" y="309" width="1" height="1" fill="#d0d0d0"/>
<rect x="701" y="319" width="1" height="1" fill="#d0d0d0"/>
<rect x="701" y="329" width="1" height="1" fill="#d0d0d0"/>
<rect x="701" y="339" width="1" height="1" fill="#d0d0d0"/>
<rect x="701" y="349" width="1" height="1" fill="#d0d0d0"/>
<rect x="701" y="359" width="1" height="1" fill="#d0d0d0"/>
<rect x="701" y="369" width="1" height="1" fill="#d0d0d0"/>
<rect x="701" y="379" width="1" height="1" fill="#d0d0d0"/>
<rect x="701" y="389" width="1" height="1" fill="#d0d0d0"/>
<rect x="701" y="399" width="1" height="1" fill="#d0d0d0"/>
<rect x="701" y="409" width="1" height="1" fill="#d0d0d0"/>
<rect x="701" y="419" width="1" height="1" fill="#d0d0d0"/>
<rect x="701" y="429" width="1" height="1" fill="#d0d0d0"/>
<rect x="701" y="439" width="1" height="1" fill="#d0d0d0"/>
<rect x="701" y="449" width="1" height="1" fill="#d0d0d0"/>
<rect x="701" y="459" width="1" height="1" fill="#d0d0d0"/>
<rect x="701" y="469" width="1" height="1" fill="#d0d0d0"/>
<rect x="701" y="479" width="1" height="1" fill="#d0d0d0"/>
<rect x="701" y="489" width="1" height="1" fill="#d0d0d0"/>
<rect x="701" y="499" width="1" height="1" fill="#d0d0d0"/>
<rect x="701" y="509" width="1" height="1" fill="#d0d0d0"/>
<rect x="751" y="29" width="1" height="1" fill="#d0d0d0"/>
<rect x="751" y="39" width="1" height="1" fill="#d0d0d0"/>
<rect x="751" y="49" width="1" height="1" fill="#d0d0d0"/>
<rect x="751" y="59" width="1" height="1" fill="#d0d0d0"/>
<rect x="751" y="69" width="1" height="1" fill="#d0d0d0"/>
<rect x="751" y="79" width="1" height="1" fill="#d0d0d0"/>
<rect x="751" y="89" width="1" height="1" fill="#d0d0d0"/>
<rect x="751" y="99" width="1" height="1" fill="#d0d0d0"/>
<rect x="751" y="109" width="1" height="1" fill="#d0d0d0"/>
<rect x="751" y="119" width="1" height="1" fill="#d0d0d0"/>
<rect x="751" y="129" width="1" height="1" fill="#d0d0d0"/>
<rect x="751" y="139" width="1" height="1" fill="#d0d0d0"/>
<rect x="751" y="149" width="1" height="1" fill="#d0d0d0"/>
<rect x="751" y="159" width="1" height="1" fill="#d0d0d0"/>
<rect x="751" y="169" width="1" height="1" fill="#d0d0d0"/>
<rect x="751" y="179" width="1" height="1" fill="#d0d0d0"/>
<rect x="751" y="189" width="1" height="1" fill="#d0d0d0"/>
<rect x="751" y="199" width="1" height="1" fill="#d0d0d0"/>
<rect x="751" y="209" width="1" height="1" fill="#d0d0d0"/>
<rect x="751" y="219" width="1" height="1" fill="#d0d0d0"/>
<rect x="751" y="229" width="1" height="1" fill="#d0d0d0"/>
<rect x="751" y="239" width="1" height="1" fill="#d0d0d0"/>
<rect x="751" y="249" width="1" height="1" fill="#d0d0d0"/>
<rect x="751" y="259" width="1" height="1" fill="#d0d0d0"/>
<rect x="751" y="269" width="1" height="1" fill="#d0d0d0"/>
<rect x="751" y="279" width="1" height="1" fill="#d0d0d0"/>
<rect x="751" y="289" width="1" height="1" fill="#d0d0d0"/>
<rect x="751" y="299" width="1" height="1" fill="#d0d0d0"/>
<rect x="751" y="309" width="1" height="1" fill="#d0d0d0"/>
<rect x="751" y="319" width="1" height="1" fill="#d0d0d0"/>
<rect x="751" y="329" width="1" height="1" fill="#d0d0d0"/>
<rect x="751" y="339" width="1" height="1" fill="#d0d0d0"/>
<rect x="751" y="349" width="1" height="1" fill="#d0d0d0"/>
<rect x="751" y="359" width="1" height="1" fill="#d0d0d0"/>
<rect x="751" y="369" width="1" height="1" fill="#d0d0d0"/>
<rect x="751" y="379" width="1" height="1" fill="#d0d0d0"/>
<rect x="751" y="389" width="1" height="1" fill="#d0d0d0"/>
<rect x="751" y="399" width="1" height="1" fill="#d0d0d0"/>
<rect x="751" y="409" width="1" height="1" fill="#d0d0d0"/>
<rect x="751" y="419" width="1" height="1" fill="#d0d0d0"/>
<rect x="751" y="429" width="1" height="1" fill="#d0d0d0"/>
<rect x="751" y="439" width="1" height="1" fill="#d0d0d0"/>
<rect x="751" y="449" width="1" height="1" fill="#d0d0d0"/>
<rect x="751" y="459" width="1" height="1" fill="#d0d0d0"/>
<rect x="751" y="469" width="1" height="1" fill="#d0d0d0"/>
<rect x="751" y="479" width="1" height="1" fill="#d0d0d0"/>
<rect x="751" y="489" width="1" height="1" fill="#d0d0d0"/>
<rect x="751" y="499" width="1" height="1" fill="#d0d0d0"/>
<rect x="751" y="509" width="1" height="1" fill="#d0d0d0"/>
<rect x="31" y="69" width="1" height="1" fill="#d0d0d0"/>
<rect x="41" y="69" width="1" height="1" fill="#d0d0d0"/>
<rect x="61" y="69" width="1" height="1" fill="#d0d0d0"/>
<rect x="71" y="69" width="1" height="1" fill="#d0d0d0"/>
<rect x="81" y="69" width="1" height="1" fill="#d0d0d0"/>
<rect x="91" y="69" width="1" height="1" fill="#d0d0d0"/>
<rect x="111" y="69" width="1" height="1" fill="#d0d0d0"/>
<rect x="121" y="69" width="1" height="1" fill="#d0d0d0"/>
<rect x="131" y="69" width="1" height="1" fill="#d0d0d0"/>
<rect x="141" y="69" width="1" height="1" fill="#d0d0d0"/>
<rect x="161" y="69" width="1" height="1" fill="#d0d0d0"/>
<rect x="171" y="69" width="1" height="1" fill="#d0d0d0"/>
<rect x="181" y="69" width="1" height="1" fill="#d0d0d0"/>
<rect x="191" y="69" width="1" height="1" fill="#d0d0d0"/>
<rect x="211" y="69" width="1" height="1" fill="#d0d0d0"/>
<rect x="221" y="69" width="1" height="1" fill="#d0d0d0"/>
<rect x="231" y="69" width="1" height="1" fill="#d0d0d0"/>
<rect x="241" y="69" width="1" height="1" fill="#d0d0d0"/>
<rect x="261" y="69" width="1" height="1" fill="#d0d0d0"/>
<rect x="271" y="69" width="1" height="1" fill="#d0d0d0"/>
<rect x="281" y="69" width="1" height="1" fill="#d0d0d0"/>
<rect x="291" y="69" width="1" height="1" fill="#d0d0d0"/>
<rect x="311" y="69" width="1" height="1" fill="#d0d0d0"/>
<rect x="321" y="69" width="1" height="1" fill="#d0d0d0"/>
<rect x="331" y="69" width="1" height="1" fill="#d0d0d0"/>
<rect x="341" y="69" width="1" height="1" fill="#d0d0d0"/>
<rect x="361" y="69" width="1" height="1" fill="#d0d0d0"/>
<rect x="371" y="69" width="1" height="1" fill="#d0d0d0"/>
<rect x="381" y="69" width="1" height="1" fill="#d0d0d0"/>
<rect x="391" y="69" width="1" height="1" fill="#d0d0d0"/>
<rect x="411" y="69" width="1" height="1" fill="#d0d0d0"/>
<rect x="421" y="69" width="1" height="1" fill="#d0d0d0"/>
<rect x="431" y="69" width="1" height="1" fill="#d0d0d0"/>
<rect x="441" y="69" width="1" height="1" fill="#d0d0d0"/>
<rect x="461" y="69" width="1" height="1" fill="#d0d0d0"/>
<rect x="471" y="69" width="1" height="1" fill="#d0d0d0"/>
<rect x="481" y="69" width="1" height="1" fill="#d0d0d0"/>
<rect x="491" y="69" width="1" height="1" fill="#d0d0d0"/>
<rect x="511" y="69" width="1" height="1" fill="#d0d0d0"/>
<rect x="521" y="69" width="1" height="1" fill="#d0d0d0"/>
<rect x="531" y="69" width="1" height="1" fill="#d0d0d0"/>
<rect x="541" y="69" width="1" height="1" fill="#d0d0d0"/>
<rect x="561" y="69" width="1" height="1" fill="#d0d0d0"/>
<rect x="571" y="69" width="1" height="1" fill="#d0d0d0"/>
<rect x="581" y="69" width="1" height="1" fill="#d0d0d0"/>
<rect x="591" y="69" width="1" height="1" fill="#d0d0d0"/>
<rect x="611" y="69" width="1" height="1" fill="#d0d0d0"/>
<rect x="621" y="69" width="1" height="1" fill="#d0d0d0"/>
<rect x="631" y="69" width="1" height="1" fill="#d0d0d0"/>
<rect x="641" y="69" width="1" height="1" fill="#d0d0d0"/>
<rect x="661" y="69" width="1" height="1" fill="#d0d0d0"/>
<rect x="671" y="69" width="1" height="1" fill="#d0d0d0"/>
<rect x="681" y="69" width="1" height="1" fill="#d0d0d0"/>
<rect x="691" y="69" width="1" height="1" fill="#d0d0d0"/>
<rect x="711" y="69" width="1" height="1" fill="#d0d0d0"/>
<rect x="721" y="69" width="1" height="1" fill="#d0d0d0"/>
<rect x="731" y="69" width="1" height="1" fill="#d0d0d0"/>
<rect x="741" y="69" width="1" height="1" fill="#d0d0d0"/>
<rect x="761" y="69" width="1" height="1" fill="#d0d0d0"/>
<rect x="771" y="69" width="1" height="1" fill="#d0d0d0"/>
<rect x="31" y="119" width="1" height="1" fill="#d0d0d0"/>
<rect x="41" y="119" width="1" height="1" fill="#d0d0d0"/>
<rect x="61" y="119" width="1" height="1" fill="#d0d0d0"/>
<rect x="71" y="119" width="1" height="1" fill="#d0d0d0"/>
<rect x="81" y="119" width="1" height="1" fill="#d0d0d0"/>
<rect x="91" y="119" width="1" height="1" fill="#d0d0d0"/>
<rect x="111" y="119" width="1" height="1" fill="#d0d0d0"/>
<rect x="121" y="119" width="1" height="1" fill="#d0d0d0"/>
<rect x="131" y="119" width="1" height="1" fill="#d0d0d0"/>
<rect x="141" y="119" width="1" height="1" fill="#d0d0d0"/>
<rect x="161" y="119" width="1" height="1" fill="#d0d0d0"/>
<rect x="171" y="119" width="1" height="1" fill="#d0d0d0"/>
<rect x="181" y="119" width="1" height="1" fill="#d0d0d0"/>
<rect x="191" y="119" width="1" height="1" fill="#d0d0d0"/>
<rect x="211" y="119" width="1" height="1" fill="#d0d0d0"/>
<rect x="221" y="119" width="1" height="1" fill="#d0d0d0"/>
<rect x="231" y="119" width="1" height="1" fill="#d0d0d0"/>
<rect x="241" y="119" width="1" height="1" fill="#d0d0d0"/>
<rect x="261" y="119" width="1" height="1" fill="#d0d0d0"/>
<rect x="271" y="119" width="1" height="1" fill="#d0d0d0"/>
<rect x="281" y="119" width="1" height="1" fill="#d0d0d0"/>
<rect x="291" y="119" width="1" height="1" fill="#d0d0d0"/>
<rect x="311" y="119" width="1" height="1" fill="#d0d0d0"/>
<rect x="321" y="119" width="1" height="1" fill="#d0d0d0"/>
<rect x="331" y="119" width="1" height="1" fill="#d0d0d0"/>
<rect x="341" y="119" width="1" height="1" fill="#d0d0d0"/>
<rect x="361" y="119" width="1" height="1" fill="#d0d0d0"/>
<rect x="371" y="119" width="1" height="1" fill="#d0d0d0"/>
<rect x="381" y="119" width="1" height="1" fill="#d0d0d0"/>
<rect x="391" y="119" width="1" height="1" fill="#d0d0d0"/>
<rect x="411" y="119" width="1" height="1" fill="#d0d0d0"/>
<rect x="421" y="119" width="1" height="1" fill="#d0d0d0"/>
<rect x="431" y="119" width="1" height="1" fill="#d0d0d0"/>
<rect x="441" y="119" width="1" height="1" fill="#d0d0d0"/>
<rect x="461" y="119" width="1" height="1" fill="#d0d0d0"/>
<rect x="471" y="119" width="1" height="1" fill="#d0d0d0"/>
<rect x="481" y="119" width="1" height="1" fill="#d0d0d0"/>
<rect x="491" y="119" width="1" height="1" fill="#d0d0d0"/>
<rect x="511" y="119" width="1" height="1" fill="#d0d0d0"/>
<rect x="521" y="119" width="1" height="1" fill="#d0d0d0"/>
<rect x="531" y="119" width="1" height="1" fill="#d0d0d0"/>
<rect x="541" y="119" width="1" height="1" fill="#d0d0d0"/>
<rect x="561" y="119" width="1" height="1" fill="#d0d0d0"/>
<rect x="571" y="119" width="1" height="1" fill="#d0d0d0"/>
<rect x="581" y="119" width="1" height="1" fill="#d0d0d0"/>
<rect x="591" y="119" width="1" height="1" fill="#d0d0d0"/>
<rect x="611" y="119" width="1" height="1" fill="#d0d0d0"/>
<rect x="621" y="119" width="1" height="1" fill="#d0d0d0"/>
<rect x="631" y="119" width="1" height="1" fill="#d0d0d0"/>
<rect x="641" y="119" width="1" height="1" fill="#d0d0d0"/>
<rect x="661" y="119" width="1" height="1" fill="#d0d0d0"/>
<rect x="671" y="119" width="1" height="1" fill="#d0d0d0"/>
<rect x="681" y="119" width="1" height="1" fill="#d0d0d0"/>
<rect x="691" y="119" width="1" height="1" fill="#d0d0d0"/>
<rect x="711" y="119" width="1" height="1" fill="#d0d0d0"/>
<rect x="721" y="119" width="1" height="1" fill="#d0d0d0"/>
<rect x="731" y="119" width="1" height="1" fill="#d0d0d0"/>
<rect x="741" y="119" width="1" height="1" fill="#d0d0d0"/>
<rect x="761" y="119" width="1" height="1" fill="#d0d0d0"/>
<rect x="771" y="119" width="1" height="1" fill="#d0d0d0"/>
<rect x="31" y="169" width="1" height="1" fill="#d0d0d0"/>
<rect x="41" y="169" width="1" height="1" fill="#d0d0d0"/>
<rect x="61" y="169" width="1" height="1" fill="#d0d0d0"/>
<rect x="71" y="169" width="1" height="1" fill="#d0d0d0"/>
<rect x="81" y="169" width="1" height="1" fill="#d0d0d0"/>
<rect x="91" y="169" width="1" height="1" fill="#d0d0d0"/>
<rect x="111" y="169" width="1" height="1" fill="#d0d0d0"/>
<rect x="121" y="169" width="1" height="1" fill="#d0d0d0"/>
<rect x="131" y="169" width="1" height="1" fill="#d0d0d0"/>
<rect x="141" y="169" width="1" height="1" fill="#d0d0d0"/>
<rect x="161" y="169" width="1" height="1" fill="#d0d0d0"/>
<rect x="171" y="169" width="1" height="1" fill="#d0d0d0"/>
<rect x="181" y="169" width="1" height="1" fill="#d0d0d0"/>
<rect x="191" y="169" width="1" height="1" fill="#d0d0d0"/>
<rect x="211" y="169" width="1" height="1" fill="#d0d0d0"/>
<rect x="221" y="169" width="1" height="1" fill="#d0d0d0"/>
<rect x="231" y="169" width="1" height="1" fill="#d0d0d0"/>
<rect x="241" y="169" width="1" height="1" fill="#d0d0d0"/>
<rect x="261" y="169" width="1" height="1" fill="#d0d0d0"/>
<rect x="271" y="169" width="1" height="1" fill="#d0d0d0"/>
<rect x="281" y="169" width="1" height="1" fill="#d0d0d0"/>
<rect x="291" y="169" width="1" height="1" fill="#d0d0d0"/>
<rect x="311" y="169" width="1" height="1" fill="#d0d0d0"/>
<rect x="321" y="169" width="1" height="1" fill="#d0d0d0"/>
<rect x="331" y="169" width="1" height="1" fill="#d0d0d0"/>
<rect x="341" y="169" width="1" height="1" fill="#d0d0d0"/>
<rect x="361" y="169" width="1" height="1" fill="#d0d0d0"/>
<rect x="371" y="169" width="1" height="1" fill="#d0d0d0"/>
<rect x="381" y="169" width="1" height="1" fill="#d0d0d0"/>
<rect x="391" y="169" width="1" height="1" fill="#d0d0d0"/>
<rect x="411" y="169" width="1" height="1" fill="#d0d0d0"/>
<rect x="421" y="169" width="1" height="1" fill="#d0d0d0"/>
<rect x="431" y="169" width="1" height="1" fill="#d0d0d0"/>
<rect x="441" y="169" width="1" height="1" fill="#d0d0d0"/>
<rect x="461" y="169" width="1" height="1" fill="#d0d0d0"/>
<rect x="471" y="169" width="1" height="1" fill="#d0d0d0"/>
<rect x="481" y="169" width="1" height="1" fill="#d0d0d0"/>
<rect x="491" y="169" width="1" height="1" fill="#d0d0d0"/>
<rect x="511" y="169" width="1" height="1" fill="#d0d0d0"/>
<rect x="521" y="169" width="1" height="1" fill="#d0d0d0"/>
<rect x="531" y="169" width="1" height="1" fill="#d0d0d0"/>
<rect x="541" y="169" width="1" height="1" fill="#d0d0d0"/>
<rect x="561" y="169" width="1" height="1" fill="#d0d0d0"/>
<rect x="571" y="169" width="1" height="1" fill="#d0d0d0"/>
<rect x="581" y="169" width="1" height="1" fill="#d0d0d0"/>
<rect x="591" y="169" width="1" height="1" fill="#d0d0d0"/>
<rect x="611" y="169" width="1" height="1" fill="#d0d0d0"/>
<rect x="621" y="169" width="1" height="1" fill="#d0d0d0"/>
<rect x="631" y="169" width="1" height="1" fill="#d0d0d0"/>
<rect x="641" y="169" width="1" height="1" fill="#d0d0d0"/>
<rect x="661" y="169" width="1" height="1" fill="#d0d0d0"/>
<rect x="671" y="169" width="1" height="1" fill="#d0d0d0"/>
<rect x="681" y="169" width="1" height="1" fill="#d0d0d0"/>
<rect x="691" y="169" width="1" height="1" fill="#d0d0d0"/>
<rect x="711" y="169" width="1" height="1" fill="#d0d0d0"/>
<rect x="721" y="169" width="1" height="1" fill="#d0d0d0"/>
<rect x="731" y="169" width="1" height="1" fill="#d0d0d0"/>
<rect x="741" y="169" width="1" height="1" fill="#d0d0d0"/>
<rect x="761" y="169" width="1" height="1" fill="#d0d0d0"/>
<rect x="771" y="169" width="1" height="1" fill="#d0d0d0"/>
<rect x="31" y="219" width="1" height="1" fill="#d0d0d0"/>
<rect x="41" y="219" width="1" height="1" fill="#d0d0d0"/>
<rect x="61" y="219" width="1" height="1" fill="#d0d0d0"/>
<rect x="71" y="219" width="1" height="1" fill="#d0d0d0"/>
<rect x="81" y="219" width="1" height="1" fill="#d0d0d0"/>
<rect x="91" y="219" width="1" height="1" fill="#d0d0d0"/>
<rect x="111" y="219" width="1" height="1" fill="#d0d0d0"/>
<rect x="121" y="219" width="1" height="1" fill="#d0d0d0"/>
<rect x="131" y="219" width="1" height="1" fill="#d0d0d0"/>
<rect x="141" y="219" width="1" height="1" fill="#d0d0d0"/>
<rect x="161" y="219" width="1" height="1" fill="#d0d0d0"/>
<rect x="171" y="219" width="1" height="1" fill="#d0d0d0"/>
<rect x="181" y="219" width="1" height="1" fill="#d0d0d0"/>
<rect x="191" y="219" width="1" height="1" fill="#d0d0d0"/>
<rect x="211" y="219" width="1" height="1" fill="#d0d0d0"/>
<rect x="221" y="219" width="1" height="1" fill="#d0d0d0"/>
<rect x="231" y="219" width="1" height="1" fill="#d0d0d0"/>
<rect x="241" y="219" width="1" height="1" fill="#d0d0d0"/>
<rect x="261" y="219" width="1" height="1" fill="#d0d0d0"/>
<rect x="271" y="219" width="1" height="1" fill="#d0d0d0"/>
<rect x="281" y="219" width="1" height="1" fill="#d0d0d0"/>
<rect x="291" y="219" width="1" height="1" fill="#d0d0d0"/>
<rect x="311" y="219" width="1" height="1" fill="#d0d0d0"/>
<rect x="321" y="219" width="1" height="1" fill="#d0d0d0"/>
<rect x="331" y="219" width="1" height="1" fill="#d0d0d0"/>
<rect x="341" y="219" width="1" height="1" fill="#d0d0d0"/>
<rect x="361" y="219" width="1" height="1" fill="#d0d0d0"/>
<rect x="371" y="219" width="1" height="1" fill="#d0d0d0"/>
<rect x="381" y="219" width="1" height="1" fill="#d0d0d0"/>
<rect x="391" y="219" width="1" height="1" fill="#d0d0d0"/>
<rect x="411" y="219" width="1" height="1" fill="#d0d0d0"/>
<rect x="421" y="219" width="1" height="1" fill="#d0d0d0"/>
<rect x="431" y="219" width="1" height="1" fill="#d0d0d0"/>
<rect x="441" y="219" width="1" height="1" fill="#d0d0d0"/>
<rect x="461" y="219" width="1" height="1" fill="#d0d0d0"/>
<rect x="471" y="219" width="1" height="1" fill="#d0d0d0"/>
<rect x="481" y="219" width="1" height="1" fill="#d0d0d0"/>
<rect x="491" y="219" width="1" height="1" fill="#d0d0d0"/>
<rect x="511" y="219" width="1" height="1" fill="#d0d0d0"/>
<rect x="521" y="219" width="1" height="1" fill="#d0d0d0"/>
<rect x="531" y="219" width="1" height="1" fill="#d0d0d0"/>
<rect x="541" y="219" width="1" height="1" fill="#d0d0d0"/>
<rect x="561" y="219" width="1" height="1" fill="#d0d0d0"/>
<rect x="571" y="219" width="1" height="1" fill="#d0d0d0"/>
<rect x="581" y="219" width="1" height="1" fill="#d0d0d0"/>
<rect x="591" y="219" width="1" height="1" fill="#d0d0d0"/>
<rect x="611" y="219" width="1" height="1" fill="#d0d0d0"/>
<rect x="621" y="219" width="1" height="1" fill="#d0d0d0"/>
<rect x="631" y="219" width="1" height="1" fill="#d0d0d0"/>
<rect x="641" y="219" width="1" height="1" fill="#d0d0d0"/>
<rect x="661" y="219" width="1" height="1" fill="#d0d0d0"/>
<rect x="671" y="219" width="1" height="1" fill="#d0d0d0"/>
<rect x="681" y="219" width="1" height="1" fill="#d0d0d0"/>
<rect x="691" y="219" width="1" height="1" fill="#d0d0d0"/>
<rect x="711" y="219" width="1" height="1" fill="#d0d0d0"/>
<rect x="721" y="219" width="1" height="1" fill="#d0d0d0"/>
<rect x="731" y="219" width="1" height="1" fill="#d0d0d0"/>
<rect x="741" y="219" width="1" height="1" fill="#d0d0d0"/>
<rect x="761" y="219" width="1" height="1" fill="#d0d0d0"/>
<rect x="771" y="219" width="1" height="1" fill="#d0d0d0"/>
<rect x="31" y="319" width="1" height="1" fill="#d0d0d0"/>
<rect x="41" y="319" width="1" height="1" fill="#d0d0d0"/>
<rect x="61" y="319" width="1" height="1" fill="#d0d0d0"/>
<rect x="71" y="319" width="1" height="1" fill="#d0d0d0"/>
<rect x="81" y="319" width="1" height="1" fill="#d0d0d0"/>
<rect x="91" y="319" width="1" height="1" fill="#d0d0d0"/>
<rect x="111" y="319" width="1" height="1" fill="#d0d0d0"/>
<rect x="121" y="319" width="1" height="1" fill="#d0d0d0"/>
<rect x="131" y="319" width="1" height="1" fill="#d0d0d0"/>
<rect x="141" y="319" width="1" height="1" fill="#d0d0d0"/>
<rect x="161" y="319" width="1" height="1" fill="#d0d0d0"/>
<rect x="171" y="319" width="1" height="1" fill="#d0d0d0"/>
<rect x="181" y="319" width="1" height="1" fill="#d0d0d0"/>
<rect x="191" y="319" width="1" height="1" fill="#d0d0d0"/>
<rect x="211" y="319" width="1" height="1" fill="#d0d0d0"/>
<rect x="221" y="319" width="1" height="1" fill="#d0d0d0"/>
<rect x="231" y="319" width="1" height="1" fill="#d0d0d0"/>
<rect x="241" y="319" width="1" height="1" fill="#d0d0d0"/>
<rect x="261" y="319" width="1" height="1" fill="#d0d0d0"/>
<rect x="271" y="319" width="1" height="1" fill="#d0d0d0"/>
<rect x="281" y="319" width="1" height="1" fill="#d0d0d0"/>
<rect x="291" y="319" width="1" height="1" fill="#d0d0d0"/>
<rect x="311" y="319" width="1" height="1" fill="#d0d0d0"/>
<rect x="321" y="319" width="1" height="1" fill="#d0d0d0"/>
<rect x="331" y="319" width="1" height="1" fill="#d0d0d0"/>
<rect x="341" y="319" width="1" height="1" fill="#d0d0d0"/>
<rect x="361" y="319" width="1" height="1" fill="#d0d0d0"/>
<rect x="371" y="319" width="1" height="1" fill="#d0d0d0"/>
<rect x="381" y="319" width="1" height="1" fill="#d0d0d0"/>
<rect x="391" y="319" width="1" height="1" fill="#d0d0d0"/>
<rect x="411" y="319" width="1" height="1" fill="#d0d0d0"/>
<rect x="421" y="319" width="1" height="1" fill="#d0d0d0"/>
<rect x="431" y="319" width="1" height="1" fill="#d0d0d0"/>
<rect x="441" y="319" width="1" height="1" fill="#d0d0d0"/>
<rect x="461" y="319" width="1" height="1" fill="#d0d0d0"/>
<rect x="471" y="319" width="1" height="1" fill="#d0d0d0"/>
<rect x="481" y="319" width="1" height="1" fill="#d0d0d0"/>
<rect x="491" y="319" width="1" height="1" fill="#d0d0d0"/>
<rect x="511" y="319" width="1" height="1" fill="#d0d0d0"/>
<rect x="521" y="319" width="1" height="1" fill="#d0d0d0"/>
<rect x="531" y="319" width="1" height="1" fill="#d0d0d0"/>
<rect x="541" y="319" width="1" height="1" fill="#d0d0d0"/>
<rect x="561" y="319" width="1" height="1" fill="#d0d0d0"/>
<rect x="571" y="319" width="1" height="1" fill="#d0d0d0"/>
<rect x="581" y="319" width="1" height="1" fill="#d0d0d0"/>
<rect x="591" y="319" width="1" height="1" fill="#d0d0d0"/>
<rect x="611" y="319" width="1" height="1" fill="#d0d0d0"/>
<rect x="621" y="319" width="1" height="1" fill="#d0d0d0"/>
<rect x="631" y="319" width="1" height="1" fill="#d0d0d0"/>
<rect x="641" y="319" width="1" height="1" fill="#d0d0d0"/>
<rect x="661" y="319" width="1" height="1" fill="#d0d0d0"/>
<rect x="671" y="319" width="1" height="1" fill="#d0d0d0"/>
<rect x="681" y="319" width="1" height="1" fill="#d0d0d0"/>
<rect x="691" y="319" width="1" height="1" fill="#d0d0d0"/>
<rect x="711" y="319" width="1" height="1" fill="#d0d0d0"/>
<rect x="721" y="319" width="1" height="1" fill="#d0d0d0"/>
<rect x="731" y="319" width="1" height="1" fill="#d0d0d0"/>
<rect x="741" y="319" width="1" height="1" fill="#d0d0d0"/>
<rect x="761" y="319" width="1" height="1" fill="#d0d0d0"/>
<rect x="771" y="319" width="1" height="1" fill="#d0d0d0"/>
<rect x="31" y="369" width="1" height="1" fill="#d0d0d0"/>
<rect x="41" y="369" width="1" height="1" fill="#d0d0d0"/>
<rect x="61" y="369" width="1" height="1" fill="#d0d0d0"/>
<rect x="71" y="369" width="1" height="1" fill="#d0d0d0"/>
<rect x="81" y="369" width="1" height="1" fill="#d0d0d0"/>
<rect x="91" y="369" width="1" height="1" fill="#d0d0d0"/>
<rect x="111" y="369" width="1" height="1" fill="#d0d0d0"/>
<rect x="121" y="369" width="1" height="1" fill="#d0d0d0"/>
<rect x="131" y="369" width="1" height="1" fill="#d0d0d0"/>
<rect x="141" y="369" width="1" height="1" fill="#d0d0d0"/>
<rect x="161" y="369" width="1" height="1" fill="#d0d0d0"/>
<rect x="171" y="369" width="1" height="1" fill="#d0d0d0"/>
<rect x="181" y="369" width="1" height="1" fill="#d0d0d0"/>
<rect x="191" y="369" width="1" height="1" fill="#d0d0d0"/>
<rect x="211" y="369" width="1" height="1" fill="#d0d0d0"/>
<rect x="221" y="369" width="1" height="1" fill="#d0d0d0"/>
<rect x="231" y="369" width="1" height="1" fill="#d0d0d0"/>
<rect x="241" y="369" width="1" height="1" fill="#d0d0d0"/>
<rect x="261" y="369" width="1" height="1" fill="#d0d0d0"/>
<rect x="271" y="369" width="1" height="1" fill="#d0d0d0"/>
<rect x="281" y="369" width="1" height="1" fill="#d0d0d0"/>
<rect x="291" y="369" width="1" height="1" fill="#d0d0d0"/>
<rect x="311" y="369" width="1" height="1" fill="#d0d0d0"/>
<rect x="321" y="369" width="1" height="1" fill="#d0d0d0"/>
<rect x="331" y="369" width="1" height="1" fill="#d0d0d0"/>
<rect x="341" y="369" width="1" height="1" fill="#d0d0d0"/>
<rect x="361" y="369" width="1" height="1" fill="#d0d0d0"/>
<rect x="371" y="369" width="1" height="1" fill="#d0d0d0"/>
<rect x="381" y="369" width="1" height="1" fill="#d0d0d0"/>
<rect x="391" y="369" width="1" height="1" fill="#d0d0d0"/>
<rect x="411" y="369" width="1" height="1" fill="#d0d0d0"/>
<rect x="421" y="369" width="1" height="1" fill="#d0d0d0"/>
<rect x="431" y="369" width="1" height="1" fill="#d0d0d0"/>
<rect x="441" y="369" width="1" height="1" fill="#d0d0d0"/>
<rect x="461" y="369" width="1" height="1" fill="#d0d0d0"/>
<rect x="471" y="369" width="1" height="1" fill="#d0d0d0"/>
<rect x="481" y="369" width="1" height="1" fill="#d0d0d0"/>
<rect x="491" y="369" width="1" height="1" fill="#d0d0d0"/>
<rect x="511" y="369" width="1" height="1" fill="#d0d0d0"/>
<rect x="521" y="369" width="1" height="1" fill="#d0d0d0"/>
<rect x="531" y="369" width="1" height="1" fill="#d0d0d0"/>
<rect x="541" y="369" width="1" height="1" fill="#d0d0d0"/>
<rect x="561" y="369" width="1" height="1" fill="#d0d0d0"/>
<rect x="571" y="369" width="1" height="1" fill="#d0d0d0"/>
<rect x="581" y="369" width="1" height="1" fill="#d0d0d0"/>
<rect x="591" y="369" width="1" height="1" fill="#d0d0d0"/>
<rect x="611" y="369" width="1" height="1" fill="#d0d0d0"/>
<rect x="621" y="369" width="1" height="1" fill="#d0d0d0"/>
<rect x="631" y="369" width="1" height="1" fill="#d0d0d0"/>
<rect x="641" y="369" width="1" height="1" fill="#d0d0d0"/>
<rect x="661" y="369" width="1" height="1" fill="#d0d0d0"/>
<rect x="671" y="369" width="1" height="1" fill="#d0d0d0"/>
<rect x="681" y="369" width="1" height="1" fill="#d0d0d0"/>
<rect x="691" y="369" width="1" height="1" fill="#d0d0d0"/>
<rect x="711" y="369" width="1" height="1" fill="#d0d0d0"/>
<rect x="721" y="369" width="1" height="1" fill="#d0d0d0"/>
<rect x="731" y="369" width="1" height="1" fill="#d0d0d0"/>
<rect x="741" y="369" width="1" height="1" fill="#d0d0d0"/>
<rect x="761" y="369" width="1" height="1" fill="#d0d0d0"/>
<rect x="771" y="369" width="1" height="1" fill="#d0d0d0"/>
<rect x="31" y="419" width="1" height="1" fill="#d0d0d0"/>
<rect x="41" y="419" width="1" height="1" fill="#d0d0d0"/>
<rect x="61" y="419" width="1" height="1" fill="#d0d0d0"/>
<rect x="71" y="419" width="1" height="1" fill="#d0d0d0"/>
<rect x="81" y="419" width="1" height="1" fill="#d0d0d0"/>
<rect x="91" y="419" width="1" height="1" fill="#d0d0d0"/>
<rect x="111" y="419" width="1" height="1" fill="#d0d0d0"/>
<rect x="121" y="419" width="1" height="1" fill="#d0d0d0"/>
<rect x="131" y="419" width="1" height="1" fill="#d0d0d0"/>
<rect x="141" y="419" width="1" height="1" fill="#d0d0d0"/>
<rect x="161" y="419" width="1" height="1" fill="#d0d0d0"/>
<rect x="171" y="419" width="1" height="1" fill="#d0d0d0"/>
<rect x="181" y="419" width="1" height="1" fill="#d0d0d0"/>
<rect x="191" y="419" width="1" height="1" fill="#d0d0d0"/>
<rect x="211" y="419" width="1" height="1" fill="#d0d0d0"/>
<rect x="221" y="419" width="1" height="1" fill="#d0d0d0"/>
<rect x="231" y="419" width="1" height="1" fill="#d0d0d0"/>
<rect x="241" y="419" width="1" height="1" fill="#d0d0d0"/>
<rect x="261" y="419" width="1" height="1" fill="#d0d0d0"/>
<rect x="271" y="419" width="1" height="1" fill="#d0d0d0"/>
<rect x="281" y="419" width="1" height="1" fill="#d0d0d0"/>
<rect x="291" y="419" width="1" height="1" fill="#d0d0d0"/>
<rect x="311" y="419" width="1" height="1" fill="#d0d0d0"/>
<rect x="321" y="419" width="1" height="1" fill="#d0d0d0"/>
<rect x="331" y="419" width="1" height="1" fill="#d0d0d0"/>
<rect x="341" y="419" width="1" height="1" fill="#d0d0d0"/>
<rect x="361" y="419" width="1" height="1" fill="#d0d0d0"/>
<rect x="371" y="419" width="1" height="1" fill="#d0d0d0"/>
<rect x="381" y="419" width="1" height="1" fill="#d0d0d0"/>
<rect x="391" y="419" width="1" height="1" fill="#d0d0d0"/>
<rect x="411" y="419" width="1" height="1" fill="#d0d0d0"/>
<rect x="421" y="419" width="1" height="1" fill="#d0d0d0"/>
<rect x="431" y="419" width="1" height="1" fill="#d0d0d0"/>
<rect x="441" y="419" width="1" height="1" fill="#d0d0d0"/>
<rect x="461" y="419" width="1" height="1" fill="#d0d0d0"/>
<rect x="471" y="419" width="1" height="1" fill="#d0d0d0"/>
<rect x="481" y="419" width="1" height="1" fill="#d0d0d0"/>
<rect x="491" y="419" width="1" height="1" fill="#d0d0d0"/>
<rect x="511" y="419" width="1" height="1" fill="#d0d0d0"/>
<rect x="521" y="419" width="1" height="1" fill="#d0d0d0"/>
<rect x="531" y="419" width="1" height="1" fill="#d0d0d0"/>
<rect x="541" y="419" width="1" height="1" fill="#d0d0d0"/>
<rect x="561" y="419" width="1" height="1" fill="#d0d0d0"/>
<rect x="571" y="419" width="1" height="1" fill="#d0d0d0"/>
<rect x="581" y="419" width="1" height="1" fill="#d0d0d0"/>
<rect x="591" y="419" width="1" height="1" fill="#d0d0d0"/>
<rect x="611" y="419" width="1" height="1" fill="#d0d0d0"/>
<rect x="621" y="419" width="1" height="1" fill="#d0d0d0"/>
<rect x="631" y="419" width="1" height="1" fill="#d0d0d0"/>
<rect x="641" y="419" width="1" height="1" fill="#d0d0d0"/>
<rect x="661" y="419" width="1" height="1" fill="#d0d0d0"/>
<rect x="671" y="419" width="1" height="1" fill="#d0d0d0"/>
<rect x="681" y="419" width="1" height="1" fill="#d0d0d0"/>
<rect x="691" y="419" width="1" height="1" fill="#d0d0d0"/>
<rect x="711" y="419" width="1" height="1" fill="#d0d0d0"/>
<rect x="721" y="419" width="1" height="1" fill="#d0d0d0"/>
<rect x="731" y="419" width="1" height="1" fill="#d0d0d0"/>
<rect x="741" y="419" width="1" height="1" fill="#d0d0d0"/>
<rect x="761" y="419" width="1" height="1" fill="#d0d0d0"/>
<rect x="771" y="419" width="1" height="1" fill="#d0d0d0"/>
<rect x="31" y="469" width="1" height="1" fill="#d0d0d0"/>
<rect x="41" y="469" width="1" height="1" fill="#d0d0d0"/>
<rect x="61" y="469" width="1" height="1" fill="#d0d0d0"/>
<rect x="71" y="469" width="1" height="1" fill="#d0d0d0"/>
<rect x="81" y="469" width="1" height="1" fill="#d0d0d0"/>
<rect x="91" y="469" width="1" height="1" fill="#d0d0d0"/>
<rect x="111" y="469" width="1" height="1" fill="#d0d0d0"/>
<rect x="121" y="469" width="1" height="1" fill="#d0d0d0"/>
<rect x="131" y="469" width="1" height="1" fill="#d0d0d0"/>
<rect x="141" y="469" width="1" height="1" fill="#d0d0d0"/>
<rect x="161" y="469" width="1" height="1" fill="#d0d0d0"/>
<rect x="171" y="469" width="1" height="1" fill="#d0d0d0"/>
<rect x="181" y="469" width="1" height="1" fill="#d0d0d0"/>
<rect x="191" y="469" width="1" height="1" fill="#d0d0d0"/>
<rect x="211" y="469" width="1" height="1" fill="#d0d0d0"/>
<rect x="221" y="469" width="1" height="1" fill="#d0d0d0"/>
<rect x="231" y="469" width="1" height="1" fill="#d0d0d0"/>
<rect x="241" y="469" width="1" height="1" fill="#d0d0d0"/>
<rect x="261" y="469" width="1" height="1" fill="#d0d0d0"/>
<rect x="271" y="469" width="1" height="1" fill="#d0d0d0"/>
<rect x="281" y="469" width="1" height="1" fill="#d0d0d0"/>
<rect x="291" y="469" width="1" height="1" fill="#d0d0d0"/>
<rect x="311" y="469" width="1" height="1" fill="#d0d0d0"/>
<rect x="321" y="469" width="1" height="1" fill="#d0d0d0"/>
<rect x="331" y="469" width="1" height="1" fill="#d0d0d0"/>
<rect x="341" y="469" width="1" height="1" fill="#d0d0d0"/>
<rect x="361" y="469" width="1" height="1" fill="#d0d0d0"/>
<rect x="371" y="469" width="1" height="1" fill="#d0d0d0"/>
<rect x="381" y="469" width="1" height="1" fill="#d0d0d0"/>
<rect x="391" y="469" width="1" height="1" fill="#d0d0d0"/>
<rect x="411" y="469" width="1" height="1" fill="#d0d0d0"/>
<rect x="421" y="469" width="1" height="1" fill="#d0d0d0"/>
<rect x="431" y="469" width="1" height="1" fill="#d0d0d0"/>
<rect x="441" y="469" width="1" height="1" fill="#d0d0d0"/>
<rect x="461" y="469" width="1" height="1" fill="#d0d0d0"/>
<rect x="471" y="469" width="1" height="1" fill="#d0d0d0"/>
<rect x="481" y="469" width="1" height="1" fill="#d0d0d0"/>
<rect x="491" y="469" width="1" height="1" fill="#d0d0d0"/>
<rect x="511" y="469" width="1" height="1" fill="#d0d0d0"/>
<rect x="521" y="469" width="1" height="1" fill="#d0d0d0"/>
<rect x="531" y="469" width="1" height="1" fill="#d0d0d0"/>
<rect x="541" y="469" width="1" height="1" fill="#d0d0d0"/>
<rect x="561" y="469" width="1" height="1" fill="#d0d0d0"/>
<rect x="571" y="469" width="1" height="1" fill="#d0d0d0"/>
<rect x="581" y="469" width="1" height="1" fill="#d0d0d0"/>
<rect x="591" y="469" width="1" height="1" fill="#d0d0d0"/>
<rect x="611" y="469" width="1" height="1" fill="#d0d0d0"/>
<rect x="621" y="469" width="1" height="1" fill="#d0d0d0"/>
<rect x="631" y="469" width="1" height="1" fill="#d0d0d0"/>
<rect x="641" y="469" width="1" height="1" fill="#d0d0d0"/>
<rect x="661" y="469" width="1" height="1" fill="#d0d0d0"/>
<rect x="671" y="469" width="1" height="1" fill="#d0d0d0"/>
<rect x="681" y="469" width="1" height="1" fill="#d0d0d0"/>
<rect x="691" y="469" width="1" height="1" fill="#d0d0d0"/>
<rect x="711" y="469" width="1" height="1" fill="#d0d0d0"/>
<rect x="721" y="469" width="1" height="1" fill="#d0d0d0"/>
<rect x="731" y="469" width="1" height="1" fill="#d0d0d0"/>
<rect x="741" y="469" width="1" height="1" fill="#d0d0d0"/>
<rect x="761" y="469" width="1" height="1" fill="#d0d0d0"/>
<rect x="771" y="469" width="1" height="1" fill="#d0d0d0"/>
<rect x="400" y="29" width="3" height="1" fill="#fff"/>
<rect x="400" y="39" width="3" height="1" fill="#fff"/>
<rect x="400" y="49" width="3" height="1" fill="#fff"/>
<rect x="400" y="59" width="3" height="1" fill="#fff"/>
<rect x="400" y="69" width="3" height="1" fill="#fff"/>
<rect x="400" y="79" width="3" height="1" fill="#fff"/>
<rect x="400" y="89" width="3" height="1" fill="#fff"/>
<rect x="400" y="99" width="3" height="1" fill="#fff"/>
<rect x="400" y="109" width="3" height="1" fill="#fff"/>
<rect x="400" y="119" width="3" height="1" fill="#fff"/>
<rect x="400" y="129" width="3" height="1" fill="#fff"/>
<rect x="400" y="139" width="3" height="1" fill="#fff"/>
<rect x="400" y="149" width="3" height="1" fill="#fff"/>
<rect x="400" y="159" width="3" height="1" fill="#fff"/>
<rect x="400" y="169" width="3" height="1" fill="#fff"/>
<rect x="400" y="179" width="3" height="1" fill="#fff"/>
<rect x="400" y="189" width="3" height="1" fill="#fff"/>
<rect x="400" y="199" width="3" height="1" fill="#fff"/>
<rect x="400" y="209" width="3" height="1" fill="#fff"/>
<rect x="400" y="219" width="3" height="1" fill="#fff"/>
<rect x="400" y="229" width="3" height="1" fill="#fff"/>
<rect x="400" y="239" width="3" height="1" fill="#fff"/>
<rect x="400" y="249" width="3" height="1" fill="#fff"/>
<rect x="400" y="259" width="3" height="1" fill="#fff"/>
<rect x="400" y="269" width="3" height="1" fill="#fff"/>
<rect x="400" y="279" width="3" height="1" fill="#fff"/>
<rect x="400" y="289" width="3" height="1" fill="#fff"/>
<rect x="400" y="299" width="3" height="1" fill="#fff"/>
<rect x="400" y="309" width="3" height="1" fill="#fff"/>
<rect x="400" y="319" width="3" height="1" fill="#fff"/>
<rect x="400" y="329" width="3" height="1" fill="#fff"/>
<rect x="400" y="339" width="3" height="1" fill="#fff"/>
<rect x="400" y="349" width="3" height="1" fill="#fff"/>
<rect x="400" y="359" width="3" height="1" fill="#fff"/>
<rect x="400" y="369" width="3" height="1" fill="#fff"/>
<rect x="400" y="379" width="3" height="1" fill="#fff"/>
<rect x="400" y="389" width="3" height="1" fill="#fff"/>
<rect x="400" y="399" width="3" height="1" fill="#fff"/>
<rect x="400" y="409" width="3" height="1" fill="#fff"/>
<rect x="400" y="419" width="3" height="1" fill="#fff"/>
<rect x="400" y="429" width="3" height="1" fill="#fff"/>
<rect x="400" y="439" width="3" height="1" fill="#fff"/>
<rect x="400" y="449" width="3" height="1" fill="#fff"/>
<rect x="400" y="459" width="3" height="1" fill="#fff"/>
<rect x="400" y="469" width="3" height="1" fill="#fff"/>
<rect x="400" y="479" width="3" height="1" fill="#fff"/>
<rect x="400" y="489" width="3" height="1" fill="#fff"/>
<rect x="400" y="499" width="3" height="1" fill="#fff"/>
<rect x="400" y="509" width="3" height="1" fill="#fff"/>
<rect x="31" y="268" width="1" height="3" fill="#fff"/>
<rect x="41" y="268" width="1" height="3" fill="#fff"/>
<rect x="51" y="268" width="1" height="3" fill="#fff"/>
<rect x="61" y="268" width="1" height="3" fill="#fff"/>
<rect x="71" y="268" width="1" height="3" fill="#fff"/>
<rect x="81" y="268" width="1" height="3" fill="#fff"/>
<rect x="91" y="268" width="1" height="3" fill="#fff"/>
<rect x="101" y="268" width="1" height="3" fill="#fff"/>
<rect x="111" y="268" width="1" height="3" fill="#fff"/>
<rect x="121" y="268" width="1" height="3" fill="#fff"/>
<rect x="131" y="268" width="1" height="3" fill="#fff"/>
<rect x="141" y="268" width="1" height="3" fill="#fff"/>
<rect x="151" y="264" width="1" height="11" fill="#fff"/>
<rect x="146" y="269" width="11" height="1" fill="#fff"/>
<rect x="161" y="268" width="1" height="3" fill="#fff"/>
<rect x="171" y="268" width="1" height="3" fill="#fff"/>
<rect x="181" y="268" width="1" height="3" fill="#fff"/>
<rect x="191" y="268" width="1" height="3" fill="#fff"/>
<rect x="201" y="268" width="1" height="3" fill="#fff"/>
<rect x="211" y="268" width="1" height="3" fill="#fff"/>
<rect x="221" y="268" width="1" height="3" fill="#fff"/>
<rect x="231" y="268" width="1" height="3" fill="#fff"/>
<rect x="241" y="268" width="1" height="3" fill="#fff"/>
<rect x="251" y="268" width="1" height="3" fill="#fff"/>
<rect x="261" y="268" width="1" height="3" fill="#fff"/>
<rect x="271" y="268" width="1" height="3" fill="#fff"/>
<rect x="281" y="268" width="1" height="3" fill="#fff"/>
<rect x="291" y="268" width="1" height="3" fill="#fff"/>
<rect x="301" y="268" width="1" height="3" fill="#fff"/>
<rect x="311" y="268" width="1" height="3" fill="#fff"/>
<rect x="321" y="268" width="1" height="3" fill="#fff"/>
<rect x="331" y="268" width="1" height="3" fill="#fff"/>
<rect x="341" y="268" width="1" height="3" fill="#fff"/>
<rect x="351" y="268" width="1" height="3" fill="#fff"/>
<rect x="361" y="268" width="1" height="3" fill="#fff"/>
<rect x="371" y="268" width="1" height="3" fill="#fff"/>
<rect x="381" y="268" width="1" height="3" fill="#fff"/>
<rect x="391" y="268" width="1" height="3" fill="#fff"/>
<rect x="401" y="268" width="1" height="3" fill="#fff"/>
<rect x="411" y="268" width="1" height="3" fill="#fff"/>
<rect x="421" y="268" width="1" height="3" fill="#fff"/>
<rect x="431" y="268" width="1" height="3" fill="#fff"/>
<rect x="441" y="268" width="1" height="3" fill="#fff"/>
<rect x="451" y="268" width="1" height="3" fill="#fff"/>
<rect x="461" y="268" width="1" height="3" fill="#fff"/>
<rect x="471" y="268" width="1" height="3" fill="#fff"/>
<rect x="481" y="268" width="1" height="3" fill="#fff"/>
<rect x="491" y="268" width="1" height="3" fill="#fff"/>
<rect x="501" y="268" width="1" height="3" fill="#fff"/>
<rect x="511" y="268" width="1" height="3" fill="#fff"/>
<rect x="521" y="268" width="1" height="3" fill="#fff"/>
<rect x="531" y="268" width="1" height="3" fill="#fff"/>
<rect x="541" y="268" width="1" height="3" fill="#fff"/>
<rect x="551" y="268" width="1" height="3" fill="#fff"/>
<rect x="561" y="268" width="1" height="3" fill="#fff"/>
<rect x="571" y="268" width="1" height="3" fill="#fff"/>
<rect x="581" y="268" width="1" height="3" fill="#fff"/>
<rect x="591" y="268" width="1" height="3" fill="#fff"/>
<rect x="601" y="268" width="1" height="3" fill="#fff"/>
<rect x="611" y="268" width="1" height="3" fill="#fff"/>
<rect x="621" y="268" width="1" height="3" fill="#fff"/>
<rect x="631" y="268" width="1" height="3" fill="#fff"/>
<rect x="641" y="268" width="1" height="3" fill="#fff"/>
<rect x="651" y="264" width="1" height="11" fill="#fff"/>
<rect x="646" y="269" width="11" height="1" fill="#fff"/>
<rect x="661" y="268" width="1" height="3" fill="#fff"/>
<rect x="671" y="268" width="1" height="3" fill="#fff"/>
<rect x="681" y="268" width="1" height="3" fill="#fff"/>
<rect x="691" y="268" width="1" height="3" fill="#fff"/>
<rect x="701" y="268" width="1" height="3" fill="#fff"/>
<rect x="711" y="268" width="1" height="3" fill="#fff"/>
<rect x="721" y="268" width="1" height="3" fill="#fff"/>
<rect x="731" y="268" width="1" height="3" fill="#fff"/>
<rect x="741" y="268" width="1" height="3" fill="#fff"/>
<rect x="751" y="268" width="1" height="3" fill="#fff"/>
<rect x="761" y="268" width="1" height="3" fill="#fff"/>
<rect x="771" y="268" width="1" height="3" fill="#fff"/>
<rect x="31" y="21" width="1" height="2" fill="#fff"/>
<rect x="31" y="515" width="1" height="2" fill="#fff"/>
<rect x="41" y="21" width="1" height="2" fill="#fff"/>
<rect x="41" y="515" width="1" height="2" fill="#fff"/>
<rect x="51" y="21" width="1" height="5" fill="#fff"/>
<rect x="51" y="512" width="1" height="5" fill="#fff"/>
<rect x="61" y="21" width="1" height="2" fill="#fff"/>
<rect x="61" y="515" width="1" height="2" fill="#fff"/>
<rect x="71" y="21" width="1" height="2" fill="#fff"/>
<rect x="71" y="515" width="1" height="2" fill="#fff"/>
<rect x="81" y="21" width="1" height="2" fill="#fff"/>
<rect x="81" y="515" width="1" height="2" fill="#fff"/>
<rect x="91" y="21" width="1" height="2" fill="#fff"/>
<rect x="91" y="515" width="1" height="2" fill="#fff"/>
<rect x="101" y="21" width="1" height="5" fill="#fff"/>
<rect x="101" y="512" width="1" height="5" fill="#fff"/>
<rect x="111" y="21" width="1" height="2" fill="#fff"/>
<rect x="111" y="515" width="1" height="2" fill="#fff"/>
<rect x="121" y="21" width="1" height="2" fill="#fff"/>
<rect x="121" y="515" width="1" height="2" fill="#fff"/>
<rect x="131" y="21" width="1" height="2" fill="#fff"/>
<rect x="131" y="515" width="1" height="2" fill="#fff"/>
<rect x="141" y="21" width="1" height="2" fill="#fff"/>
<rect x="141" y="515" width="1" height="2" fill="#fff"/>
<rect x="151" y="21" width="1" height="5" fill="#fff"/>
<rect x="151" y="512" width="1" height="5" fill="#fff"/>
<rect x="161" y="21" width="1" height="2" fill="#fff"/>
<rect x="161" y="515" width="1" height="2" fill="#fff"/>
<rect x="171" y="21" width="1" height="2" fill="#fff"/>
<rect x="171" y="515" width="1" height="2" fill="#fff"/>
<rect x="181" y="21" width="1" height="2" fill="#fff"/>
<rect x="181" y="515" width="1" height="2" fill="#fff"/>
<rect x="191" y="21" width="1" height="2" fill="#fff"/>
<rect x="191" y="515" width="1" height="2" fill="#fff"/>
<rect x="201" y="21" width="1" height="5" fill="#fff"/>
<rect x="201" y="512" width="1" height="5" fill="#fff"/>
<rect x="211" y="21" width="1" height="2" fill="#fff"/>
<rect x="211" y="515" width="1" height="2" fill="#fff"/>
<rect x="221" y="21" width="1" height="2" fill="#fff"/>
<rect x="221" y="515" width="1" height="2" fill="#fff"/>
<rect x="231" y="21" width="1" height="2" fill="#fff"/>
<rect x="231" y="515" width="1" height="2" fill="#fff"/>
<rect x="241" y="21" width="1" height="2" fill="#fff"/>
<rect x="241" y="515" width="1" height="2" fill="#fff"/>
<rect x="251" y="21" width="1" height="5" fill="#fff"/>
<rect x="251" y="512" width="1" height="5" fill="#fff"/>
<rect x="261" y="21" width="1" height="2" fill="#fff"/>
<rect x="261" y="515" width="1" height="2" fill="#fff"/>
<rect x="271" y="21" width="1" height="2" fill="#fff"/>
<rect x="271" y="515" width="1" height="2" fill="#fff"/>
<rect x="281" y="21" width="1" height="2" fill="#fff"/>
<rect x="281" y="515" width="1" height="2" fill="#fff"/>
<rect x="291" y="21" width="1" height="2" fill="#fff"/>
<rect x="291" y="515" width="1" height="2" fill="#fff"/>
<rect x="301" y="21" width="1" height="5" fill="#fff"/>
<rect x="301" y="512" width="1" height="5" fill="#fff"/>
<rect x="311" y="21" width="1" height="2" fill="#fff"/>
<rect x="311" y="515" width="1" height="2" fill="#fff"/>
<rect x="321" y="21" width="1" height="2" fill="#fff"/>
<rect x="321" y="515" width="1" height="2" fill="#fff"/>
<rect x="331" y="21" width="1" height="2" fill="#fff"/>
<rect x="331" y="515" width="1" height="2" fill="#fff"/>
<rect x="341" y="21" width="1" height="2" fill="#fff"/>
<rect x="341" y="515" width="1" height="2" fill="#fff"/>
<rect x="351" y="21" width="1" height="5" fill="#fff"/>
<rect x="351" y="512" width="1" height="5" fill="#fff"/>
<rect x="361" y="21" width="1" height="2" fill="#fff"/>
<rect x="361" y="515" width="1" height="2" fill="#fff"/>
<rect x="371" y="21" width="1" height="2" fill="#fff"/>
<rect x="371" y="515" width="1" height="2" fill="#fff"/>
<rect x="381" y="21" width="1" height="2" fill="#fff"/>
<rect x="381" y="515" width="1" height="2" fill="#fff"/>
<rect x="391" y="21" width="1" height="2" fill="#fff"/>
<rect x="391" y="515" width="1" height="2" fill="#fff"/>
<rect x="401" y="21" width="1" height="5" fill="#fff"/>
<rect x="401" y="512" width="1" height="5" fill="#fff"/>
<rect x="411" y="21" width="1" height="2" fill="#fff"/>
<rect x="411" y="515" width="1" height="2" fill="#fff"/>
<rect x="421" y="21" width="1" height="2" fill="#fff"/>
<rect x="421" y="515" width="1" height="2" fill="#fff"/>
<rect x="431" y="21" width="1" height="2" fill="#fff"/>
<rect x="431" y="515" width="1" height="2" fill="#fff"/>
<rect x="441" y="21" width="1" height="2" fill="#fff"/>
<rect x="441" y="515" width="1" height="2" fill="#fff"/>
<rect x="451" y="21" width="1" height="5" fill="#fff"/>
<rect x="451" y="512" width="1" height="5" fill="#fff"/>
<rect x="461" y="21" width="1" height="2" fill="#fff"/>
<rect x="461" y="515" width="1" height="2" fill="#fff"/>
<rect x="471" y="21" width="1" height="2" fill="#fff"/>
<rect x="471" y="515" width="1" height="2" fill="#fff"/>
<rect x="481" y="21" width="1" height="2" fill="#fff"/>
<rect x="481" y="515" width="1" height="2" fill="#fff"/>
<rect x="491" y="21" width="1" height="2" fill="#fff"/>
<rect x="491" y="515" width="1" height="2" fill="#fff"/>
<rect x="501" y="21" width="1" height="5" fill="#fff"/>
<rect x="501" y="512" width="1" height="5" fill="#fff"/>
<rect x="511" y="21" width="1" height="2" fill="#fff"/>
<rect x="511" y="515" width="1" height="2" fill="#fff"/>
<rect x="521" y="21" width="1" height="2" fill="#fff"/>
<rect x="521" y="515" width="1" height="2" fill="#fff"/>
<rect x="531" y="21" width="1" height="2" fill="#fff"/>
<rect x="531" y="515" width="1" height="2" fill="#fff"/>
<rect x="541" y="21" width="1" height="2" fill="#fff"/>
<rect x="541" y="515" width="1" height="2" fill="#fff"/>
<rect x="551" y="21" width="1" height="5" fill="#fff"/>
<rect x="551" y="512" width="1" height="5" fill="#fff"/>
<rect x="561" y="21" width="1" height="2" fill="#fff"/>
<rect x="561" y="515" width="1" height="2" fill="#fff"/>
<rect x="571" y="21" width="1" height="2" fill="#fff"/>
<rect x="571" y="515" width="1" height="2" fill="#fff"/>
<rect x="581" y="21" width="1" height="2" fill="#fff"/>
<rect x="581" y="515" width="1" height="2" fill="#fff"/>
<rect x="591" y="21" width="1" height="2" fill="#fff"/>
<rect x="591" y="515" width="1" height="2" fill="#fff"/>
<rect x="601" y="21" width="1" height="5" fill="#fff"/>
<rect x="601" y="512" width="1" height="5" fill="#fff"/>
<rect x="611" y="21" width="1" height="2" fill="#fff"/>
<rect x="611" y="515" width="1" height="2" fill="#fff"/>
<rect x="621" y="21" width="1" height="2" fill="#fff"/>
<rect x="621" y="515" width="1" height="2" fill="#fff"/>
<rect x="631" y="21" width="1" height="2" fill="#fff"/>
<rect x="631" y="515" width="1" height="2" fill="#fff"/>
<rect x="641" y="21" width="1" height="2" fill="#fff"/>
<rect x="641" y="515" width="1" height="2" fill="#fff"/>
<rect x="651" y="21" width="1" height="5" fill="#fff"/>
<rect x="651" y="512" width="1" height="5" fill="#fff"/>
<rect x="661" y="21" width="1" height="2" fill="#fff"/>
<rect x="661" y="515" width="1" height="2" fill="#fff"/>
<rect x="671" y="21" width="1" height="2" fill="#fff"/>
<rect x="671" y="515" width="1" height="2" fill="#fff"/>
<rect x="681" y="21" width="1" height="2" fill="#fff"/>
<rect x="681" y="515" width="1" height="2" fill="#fff"/>
<rect x="691" y="21" width="1" height="2" fill="#fff"/>
<rect x="691" y="515" width="1" height="2" fill="#fff"/>
<rect x="701" y="21" width="1" height="5" fill="#fff"/>
<rect x="701" y="512" width="1" height="5" fill="#fff"/>
<rect x="711" y="21" width="1" height="2" fill="#fff"/>
<rect x="711" y="515" width="1" height="2" fill="#fff"/>
<rect x="721" y="21" width="1" height="2" fill="#fff"/>
<rect x="721" y="515" width="1" height="2" fill="#fff"/>
<rect x="731" y="21" width="1" height="2" fill="#fff"/>
<rect x="731" y="515" width="1" height="2" fill="#fff"/>
<rect x="741" y="21" width="1" height="2" fill="#fff"/>
<rect x="741" y="515" width="1" height="2" fill="#fff"/>
<rect x="751" y="21" width="1" height="5" fill="#fff"/>
<rect x="751" y="512" width="1" height="5" fill="#fff"/>
<rect x="761" y="21" width="1" height="2" fill="#fff"/>
<rect x="761" y="515" width="1" height="2" fill="#fff"/>
<rect x="771" y="21" width="1" height="2" fill="#fff"/>
<rect x="771" y="515" width="1" height="2" fill="#fff"/>
<rect x="22" y="29" width="3" height="1" fill="#fff"/>
<rect x="775" y="29" width="3" height="1" fill="#fff"/>
<rect x="22" y="39" width="3" height="1" fill="#fff"/>
<rect x="775" y="39" width="3" height="1" fill="#fff"/>
<rect x="22" y="49" width="3" height="1" fill="#fff"/>
<rect x="775" y="49" width="3" height="1" fill="#fff"/>
<rect x="22" y="59" width="3" height="1" fill="#fff"/>
<rect x="775" y="59" width="3" height="1" fill="#fff"/>
<rect x="22" y="69" width="6" height="1" fill="#fff"/>
<rect x="772" y="69" width="6" height="1" fill="#fff"/>
<rect x="22" y="79" width="3" height="1" fill="#fff"/>
<rect x="775" y="79" width="3" height="1" fill="#fff"/>
<rect x="22" y="89" width="3" height="1" fill="#fff"/>
<rect x="775" y="89" width="3" height="1" fill="#fff"/>
<rect x="22" y="99" width="3" height="1" fill="#fff"/>
<rect x="775" y="99" width="3" height="1" fill="#fff"/>
<rect x="22" y="109" width="3" height="1" fill="#fff"/>
<rect x="775" y="109" width="3" height="1" fill="#fff"/>
<rect x="22" y="119" width="6" height="1" fill="#fff"/>
<rect x="772" y="119" width="6" height="1" fill="#fff"/>
<rect x="22" y="129" width="3" height="1" fill="#fff"/>
<rect x="775" y="129" width="3" height="1" fill="#fff"/>
<rect x="22" y="139" width="3" height="1" fill="#fff"/>
<rect x="775" y="139" width="3" height="1" fill="#fff"/>
<rect x="22" y="149" width="3" height="1" fill="#fff"/>
<rect x="775" y="149" width="3" height="1" fill="#fff"/>
<rect x="22" y="159" width="3" height="1" fill="#fff"/>
<rect x="775" y="159" width="3" height="1" fill="#fff"/>
<rect x="22" y="169" width="6" height="1" fill="#fff"/>
<rect x="772" y="169" width="6" height="1" fill="#fff"/>
<rect x="22" y="179" width="3" height="1" fill="#fff"/>
<rect x="775" y="179" width="3" height="1" fill="#fff"/>
<rect x="22" y="189" width="3" height="1" fill="#fff"/>
<rect x="775" y="189" width="3" height="1" fill="#fff"/>
<rect x="22" y="199" width="3" height="1" fill="#fff"/>
<rect x="775" y="199" width="3" height="1" fill="#fff"/>
<rect x="22" y="209" width="3" height="1" fill="#fff"/>
<rect x="775" y="209" width="3" height="1" fill="#fff"/>
<rect x="22" y="219" width="6" height="1" fill="#fff"/>
<rect x="772" y="219" width="6" height="1" fill="#fff"/>
<rect x="22" y="229" width="3" height="1" fill="#fff"/>
<rect x="775" y="229" width="3" height="1" fill="#fff"/>
<rect x="22" y="239" width="3" height="1" fill="#fff"/>
<rect x="775" y="239" width="3" height="1" fill="#fff"/>
<rect x="22" y="249" width="3" height="1" fill="#fff"/>
<rect x="775" y="249" width="3" height="1" fill="#fff"/>
<rect x="22" y="259" width="3" height="1" fill="#fff"/>
<rect x="775" y="259" width="3" height="1" fill="#fff"/>
<rect x="22" y="269" width="6" height="1" fill="#fff"/>
<rect x="772" y="269" width="6" height="1" fill="#fff"/>
<rect x="22" y="279" width="3" height="1" fill="#fff"/>
<rect x="775" y="279" width="3" height="1" fill="#fff"/>
<rect x="22" y="289" width="3" height="1" fill="#fff"/>
<rect x="775" y="289" width="3" height="1" fill="#fff"/>
<rect x="22" y="299" width="3" height="1" fill="#fff"/>
<rect x="775" y="299" width="3" height="1" fill="#fff"/>
<rect x="22" y="309" width="3" height="1" fill="#fff"/>
<rect x="775" y="309" width="3" height="1" fill="#fff"/>
<rect x="22" y="319" width="6" height="1" fill="#fff"/>
<rect x="772" y="319" width="6" height="1" fill="#fff"/>
<rect x="22" y="329" width="3" height="1" fill="#fff"/>
<rect x="775" y="329" width="3" height="1" fill="#fff"/>
<rect x="22" y="339" width="3" height="1" fill="#fff"/>
<rect x="775" y="339" width="3" height="1" fill="#fff"/>
<rect x="22" y="349" width="3" height="1" fill="#fff"/>
<rect x="775" y="349" width="3" height="1" fill="#fff"/>
<rect x="22" y="359" width="3" height="1" fill="#fff"/>
<rect x="775" y="359" width="3" height="1" fill="#fff"/>
<rect x="22" y="369" width="6" height="1" fill="#fff"/>
<rect x="772" y="369" width="6" height="1" fill="#fff"/>
<rect x="22" y="379" width="3" height="1" fill="#fff"/>
<rect x="775" y="379" width="3" height="1" fill="#fff"/>
<rect x="22" y="389" width="3" height="1" fill="#fff"/>
<rect x="775" y="389" width="3" height="1" fill="#fff"/>
<rect x="22" y="399" width="3" height="1" fill="#fff"/>
<rect x="775" y="399" width="3" height="1" fill="#fff"/>
<rect x="22" y="409" width="3" height="1" fill="#fff"/>
<rect x="775" y="409" width="3" height="1" fill="#fff"/>
<rect x="22" y="419" width="6" height="1" fill="#fff"/>
<rect x="772" y="419" width="6" height="1" fill="#fff"/>
<rect x="22" y="429" width="3" height="1" fill="#fff"/>
<rect x="775" y="429" width="3" height="1" fill="#fff"/>
<rect x="22" y="439" width="3" height="1" fill="#fff"/>
<rect x="775" y="439" width="3" height="1" fill="#fff"/>
<rect x="22" y="449" width="3" height="1" fill="#fff"/>
<rect x="775" y="449" width="3" height="1" fill="#fff"/>
<rect x="22" y="459" width="3" height="1" fill="#fff"/>
<rect x="775" y="459" width="3" height="1" fill="#fff"/>
<rect x="22" y="469" width="6" height="1" fill="#fff"/>
<rect x="772" y="469" width="6" height="1" fill="#fff"/>
<rect x="22" y="479" width="3" height="1" fill="#fff"/>
<rect x="775" y="479" width="3" height="1" fill="#fff"/>
<rect x="22" y="489" width="3" height="1" fill="#fff"/>
<rect x="775" y="489" width="3" height="1" fill="#fff"/>
<rect x="22" y="499" width="3" height="1" fill="#fff"/>
<rect x="775" y="499" width="3" height="1" fill="#fff"/>
<rect x="22" y="509" width="3" height="1" fill="#fff"/>
<rect x="775" y="509" width="3" height="1" fill="#fff"/>
<defs><filter id="sb" x="0" y="0" width="100%" height="100%" filterUnits="userSpaceOnUse"><feGaussianBlur stdDeviation="0.55"/></filter><clipPath id="pc"><rect x="22" y="21" width="756" height="496"/></clipPath></defs>
<g clip-path="url(#pc)"><path d="M22,179V179H23V179H24V183H25V189H26V197H27V205H28V214H29V223H30V217H31V208H32V199H33V192H34V185H35V180H36V176H37V176H38V169H39V169H40V169H41V175H42V175H43V179H44V184H45V190H46V198H47V206H48V215H49V224H50V215H51V206H52V198H53V191H54V184H55V179H56V175H57V175H58V171H59V171H60V171H61V176H62V178H63V180H64V185H65V192H66V199H67V207H68V216H69V223H70V214H71V205H72V197H73V190H74V183H75V178H76V172H77V172H78V170H79V170H80V170H81V173H82V176H83V180H84V186H85V193H86V200H87V209H88V218H89V222H90V212H91V204H92V196H93V189H94V182H95V178H96V176H97V172H98V172H99V172H100V173H101V173H102V177H103V181H104V187H105V194H106V202H107V210H108V219H109V220H110V211H111V202H112V194H113V188H114V182H115V177H116V174H117V171H118V171H119V171H120V174H121V174H122V179H123V182H124V188H125V195H126V203H127V212H128V221H129V219H130V210H131V201H132V193H133V186H134V181H135V179H136V172H137V171H138V171H139V171H140V172H141V174H142V178H143V183H144V189H145V196H146V204H147V213H148V222H149V217H150V208H151V200H152V192H153V185H154V180H155V174H156V173H157V171H158V171H159V171H160V173H161V173H162V179H163V184H164V190H165V198H166V206H167V215H168V224H169V216H170V207H171V199H172V191H173V185H174V179H175V174H176V174H177V171H178V171H179V171H180V172H181V176H182V179H183V185H184V191H185V199H186V207H187V216H188V223H189V214H190V205H191V197H192V190H193V184H194V178H195V175H196V175H197V171H198V171H199V171H200V171H201V178H202V180H203V186H204V192H205V200H206V209H207V218H208V222H209V213H210V204H211V196H212V189H213V183H214V178H215V173H216V170H217V170H218V170H219V171H220V171H221V177H222V181H223V187H224V194H225V201H226V210H227V219H228V220H229V211H230V203H231V195H232V188H233V182H234V178H235V174H236V170H237V170H238V170H239V175H240V177H241V177H242V182H243V188H244V195H245V203H246V211H247V220H248V219H249V210H250V201H251V194H252V187H253V181H254V175H255V175H256V170H257V170H258V170H259V171H260V173H261V178H262V183H263V189H264V196H265V204H266V213H267V222H268V218H269V209H270V200H271V192H272V186H273V180H274V175H275V172H276V172H277V172H278V173H279V173H280V175H281V178H282V184H283V190H284V197H285V205H286V214H287V223H288V216H289V207H290V199H291V191H292V185H293V179H294V177H295V173H296V170H297V170H298V170H299V172H300V173H301V179H302V185H303V191H304V199H305V207H306V216H307V224H308V215H309V206H310V198H311V190H312V184H313V179H314V178H315V172H316V171H317V171H318V171H319V175H320V176H321V180H322V185H323V192H324V200H325V208H326V217H327V222H328V213H329V204H330V196H331V189H332V183H333V178H334V173H335V173H336V171H337V171H338V171H339V175H340V178H341V181H342V186H343V193H344V201H345V210H346V219H347V221H348V212H349V203H350V195H351V188H352V182H353V179H354V176H355V172H356V172H357V172H358V172H359V175H360V180H361V182H362V188H363V194H364V202H365V211H366V220H367V219H368V210H369V202H370V194H371V187H372V181H373V177H374V174H375V171H376V171H377V171H378V172H379V172H380V178H381V182H382V189H383V196H384V204H385V212H386V222H387V218H388V209H389V200H390V193H391V186H392V180H393V175H394V175H395V169H396V169H397V169H398V170H399V172H400V178H401V183H402V190H403V197H404V205H405V214H406V223H407V216H408V207H409V199H410V192H411V185H412V180H413V175H414V175H415V170H416V170H417V170H418V175H419V178H420V179H421V184H422V191H423V198H424V206H425V215H426V224H427V215H428V206H429V198H430V190H431V184H432V179H433V175H434V175H435V171H436V171H437V171H438V176H439V176H440V180H441V185H442V192H443V199H444V208H445V217H446V223H447V214H448V205H449V197H450V189H451V183H452V178H453V175H454V175H455V169H456V169H457V169H458V173H459V178H460V181H461V186H462V193H463V201H464V209H465V218H466V221H467V212H468V203H469V195H470V188H471V182H472V178H473V174H474V172H475V172H476V172H477V173H478V173H479V177H480V181H481V187H482V194H483V202H484V211H485V220H486V220H487V211H488V202H489V194H490V187H491V181H492V178H493V175H494V170H495V170H496V170H497V171H498V174H499V176H500V182H501V188H502V195H503V203H504V212H505V221H506V218H507V209H508V201H509V193H510V186H511V181H512V176H513V175H514V172H515V171H516V171H517V171H518V177H519V178H520V183H521V189H522V197H523V205H524V214H525V223H526V217H527V208H528V199H529V192H530V185H531V180H532V175H533V175H534V169H535V169H536V169H537V172H538V177H539V179H540V184H541V190H542V198H543V206H544V215H545V224H546V215H547V206H548V198H549V191H550V184H551V179H552V173H553V172H554V169H555V169H556V169H557V174H558V177H559V180H560V185H561V192H562V199H563V207H564V216H565V223H566V214H567V205H568V197H569V190H570V183H571V176H572V172H573V172H574V172H575V173H576V173H577V173H578V174H579V180H580V186H581V193H582V200H583V209H584V218H585V222H586V212H587V204H588V196H589V189H590V182H591V180H592V174H593V171H594V171H595V171H596V174H597V174H598V178H599V181H600V187H601V194H602V202H603V210H604V219H605V220H606V211H607V202H608V194H609V188H610V182H611V176H612V175H613V170H614V170H615V170H616V173H617V177H618V180H619V182H620V188H621V195H622V203H623V212H624V221H625V219H626V210H627V201H628V193H629V186H630V181H631V176H632V174H633V171H634V171H635V171H636V172H637V177H638V177H639V183H640V189H641V196H642V204H643V213H644V222H645V217H646V208H647V200H648V192H649V185H650V180H651V174H652V174H653V170H654V170H655V170H656V172H657V174H658V179H659V184H660V190H661V198H662V206H663V215H664V224H665V216H666V207H667V199H668V191H669V185H670V179H671V177H672V174H673V169H674V169H675V169H676V173H677V173H678V179H679V185H680V191H681V199H682V207H683V216H684V223H685V214H686V205H687V197H688V190H689V184H690V178H691V175H692V175H693V173H694V173H695V173H696V175H697V178H698V180H699V186H700V192H701V200H702V209H703V218H704V222H705V213H706V204H707V196H708V189H709V183H710V178H711V173H712V172H713V171H714V171H715V171H716V172H717V178H718V181H719V187H720V194H721V201H722V210H723V219H724V220H725V211H726V203H727V195H728V188H729V182H730V177H731V177H732V170H733V170H734V170H735V171H736V174H737V179H738V182H739V188H740V195H741V203H742V211H743V220H744V219H745V210H746V201H747V194H748V187H749V181H750V174H751V171H752V171H753V171H754V173H755V173H756V175H757V180H758V183H759V189H760V196H761V204H762V213H763V222H764V218H765V209H766V200H767V192H768V186H769V180H770V176H771V174H772V171H773V171H774V171H775V174H776V174H777V178H778V298H777V299H776V300H775V306H774V306H773V306H772V302H771V298H770V295H769V289H768V283H767V275H766V266H765V257H764V253H763V262H762V271H761V279H760V286H759V292H758V299H757V301H756V301H755V301H754V304H753V304H752V304H751V297H750V294H749V288H748V281H747V274H746V265H745V256H744V255H743V264H742V272H741V280H740V287H739V293H738V298H737V302H736V302H735V304H734V304H733V304H732V298H731V296H730V293H729V287H728V280H727V272H726V264H725V255H724V256H723V265H722V274H721V281H720V288H719V294H718V299H717V301H716V304H715V305H714V305H713V305H712V299H711V299H710V292H709V286H708V279H707V271H706V262H705V253H704V257H703V266H702V275H701V283H700V289H699V295H698V299H697V299H696V302H695V304H694V304H693V304H692V301H691V297H690V291H689V285H688V278H687V270H686V261H685V252H684V259H683V268H682V276H681V284H680V290H679V296H678V301H677V301H676V305H675V305H674V305H673V303H672V300H671V296H670V290H669V284H668V276H667V268H666V259H665V251H664V260H663V269H662V277H661V285H660V291H659V296H658V302H657V305H656V305H655V305H654V304H653V304H652V300H651V295H650V290H649V283H648V275H647V267H646V258H645V253H644V262H643V271H642V279H641V286H640V292H639V296H638V301H637V305H636V305H635V305H634V304H633V300H632V297H631V294H630V289H629V282H628V274H627V265H626V256H625V254H624V263H623V272H622V280H621V287H620V293H619V296H618V299H617V302H616V304H615V304H614V304H613V301H612V298H611V293H610V287H609V281H608V273H607V264H606V255H605V256H604V265H603V273H602V281H601V288H600V294H599V296H598V302H597V306H596V306H595V306H594V300H593V300H592V297H591V293H590V286H589V279H588V271H587V263H586V253H585V257H584V266H583V275H582V282H581V289H580V295H579V297H578V303H577V306H576V306H575V306H574V305H573V303H572V299H571V292H570V285H569V278H568V270H567V261H566V252H565V259H564V268H563V276H562V283H561V290H560V295H559V300H558V303H557V304H556V304H555V304H554V303H553V298H552V296H551V291H550V284H549V277H548V269H547V260H546V251H545V260H544V269H543V277H542V285H541V291H540V296H539V299H538V302H537V303H536V303H535V303H534V303H533V301H532V295H531V290H530V283H529V276H528V267H527V258H526V252H525V261H524V270H523V278H522V286H521V292H520V296H519V303H518V303H517V303H516V303H515V302H514V302H513V296H512V294H511V289H510V282H509V274H508V266H507V257H506V254H505V263H504V272H503V280H502V287H501V293H500V296H499V303H498V303H497V303H496V303H495V303H494V299H493V295H492V294H491V288H490V281H489V273H488V264H487V255H486V255H485V264H484V273H483V281H482V288H481V294H480V298H479V302H478V306H477V306H476V306H475V300H474V300H473V297H472V293H471V287H470V280H469V272H468V263H467V254H466V257H465V266H464V274H463V282H462V289H461V294H460V300H459V302H458V302H457V302H456V302H455V301H454V301H453V294H452V292H451V286H450V278H449V270H448V261H447V252H446V258H445V267H444V276H443V283H442V290H441V295H440V297H439V299H438V301H437V302H436V302H435V302H434V298H433V296H432V291H431V285H430V277H429V269H428V260H427V251H426V260H425V269H424V277H423V284H422V291H421V296H420V298H419V301H418V304H417V304H416V304H415V302H414V300H413V295H412V290H411V283H410V276H409V268H408V259H407V252H406V261H405V270H404V278H403V285H402V292H401V297H400V301H399V304H398V306H397V306H396V306H395V302H394V300H393V295H392V289H391V282H390V275H389V266H388V257H387V253H386V263H385V271H384V279H383V286H382V293H381V298H380V301H379V304H378V304H377V304H376V303H375V302H374V298H373V294H372V288H371V281H370V273H369V265H368V256H367V255H366V264H365V273H364V281H363V287H362V293H361V296H360V300H359V301H358V305H357V305H356V305H355V299H354V299H353V293H352V287H351V280H350V272H349V263H348V254H347V256H346V265H345V274H344V282H343V289H342V294H341V297H340V299H339V302H338V304H337V304H336V304H335V301H334V296H333V292H332V286H331V279H330V271H329V262H328V253H327V258H326V267H325V275H324V283H323V290H322V295H321V301H320V304H319V304H318V304H317V303H316V303H315V298H314V296H313V291H312V285H311V277H310V269H309V260H308V251H307V259H306V268H305V276H304V284H303V290H302V296H301V300H300V303H299V303H298V303H297V302H296V302H295V302H294V296H293V290H292V284H291V276H290V268H289V259H288V252H287V261H286V270H285V278H284V285H283V291H282V294H281V297H280V301H279V304H278V304H277V304H276V301H275V299H274V295H273V289H272V283H271V275H270V266H269V257H268V253H267V262H266V271H265V279H264V286H263V292H262V296H261V303H260V303H259V303H258V303H257V303H256V303H255V296H254V294H253V288H252V281H251V274H250V265H249V256H248V255H247V264H246V272H245V280H244V287H243V293H242V299H241V300H240V305H239V305H238V305H237V303H236V301H235V298H234V293H233V287H232V280H231V272H230V264H229V255H228V256H227V265H226V274H225V281H224V288H223V294H222V300H221V301H220V306H219V306H218V306H217V303H216V298H215V294H214V292H213V286H212V279H211V271H210V262H209V253H208V257H207V266H206V275H205V283H204V289H203V295H202V299H201V301H200V302H199V303H198V303H197V303H196V297H195V296H194V291H193V285H192V278H191V270H190V261H189V252H188V259H187V268H186V276H185V284H184V290H183V296H182V301H181V303H180V303H179V303H178V303H177V302H176V302H175V296H174V290H173V284H172V276H171V268H170V259H169V251H168V260H167V269H166V277H165V285H164V291H163V296H162V298H161V301H160V303H159V303H158V303H157V302H156V298H155V295H154V290H153V283H152V275H151V267H150V258H149V253H148V262H147V271H146V279H145V286H144V292H143V297H142V302H141V302H140V302H139V301H138V301H137V299H136V299H135V294H134V289H133V282H132V274H131V265H130V256H129V254H128V263H127V272H126V280H125V287H124V293H123V297H122V302H121V303H120V303H119V303H118V303H117V303H116V297H115V293H114V287H113V281H112V273H111V264H110V255H109V256H108V265H107V273H106V281H105V288H104V294H103V295H102V300H101V303H100V305H99V305H98V305H97V298H96V294H95V293H94V286H93V279H92V271H91V263H90V253H89V257H88V266H87V275H86V282H85V289H84V295H83V299H82V299H81V305H80V305H79V305H78V301H77V301H76V294H75V292H74V285H73V278H72V270H71V261H70V252H69V259H68V268H67V276H66V283H65V290H64V295H63V300H62V300H61V304H60V304H59V304H58V300H57V298H56V296H55V291H54V284H53V277H52V269H51V260H50V251H49V260H48V269H47V277H46V285H45V291H44V296H43V297H42V302H41V304H40V304H39V304H38V300H37V300H36V295H35V290H34V283H33V276H32V267H31V258H30V252H29V261H28V270H27V278H26V286H25V292H24V295H23V295H22Z" fill="#580000" filter="url(#sb)"/><path d="M22,179V179H23V183H24V189H25V197H26V205H27V214H28V223H29V232H30V226H31V217H32V208H33V199H34V192H35V185H36V180H37V176H38V176H39V169H40V175H41V175H42V179H43V184H44V190H45V198H46V206H47V215H48V224H49V232H50V225H51V215H52V206H53V198H54V191H55V184H56V179H57V175H58V175H59V171H60V176H61V178H62V180H63V185H64V192H65V199H66V207H67V216H68V226H69V231H70V223H71V214H72V205H73V197H74V190H75V183H76V178H77V172H78V175H79V170H80V173H81V176H82V180H83V186H84V193H85V200H86V209H87V218H88V227H89V231H90V222H91V212H92V204H93V196H94V189H95V182H96V178H97V176H98V172H99V173H100V173H101V177H102V181H103V187H104V194H105V202H106V210H107V219H108V229H109V230H110V220H111V211H112V202H113V194H114V188H115V182H116V177H117V174H118V171H119V175H120V174H121V179H122V182H123V188H124V195H125V203H126V212H127V221H128V230H129V228H130V219H131V210H132V201H133V193H134V186H135V181H136V179H137V172H138V171H139V172H140V174H141V178H142V183H143V189H144V196H145V204H146V213H147V222H148V232H149V227H150V217H151V208H152V200H153V192H154V185H155V180H156V174H157V173H158V171H159V173H160V173H161V179H162V184H163V190H164V198H165V206H166V215H167V224H168V231H169V225H170V216H171V207H172V199H173V191H174V185H175V179H176V174H177V174H178V171H179V172H180V176H181V179H182V185H183V191H184V199H185V207H186V216H187V225H188V231H189V223H190V214H191V205H192V197H193V190H194V184H195V178H196V175H197V175H198V171H199V171H200V178H201V180H202V186H203V192H204V200H205V209H206V218H207V227H208V231H209V222H210V213H211V204H212V196H213V189H214V183H215V178H216V173H217V170H218V171H219V171H220V177H221V181H222V187H223V194H224V201H225V210H226V219H227V228H228V230H229V220H230V211H231V203H232V195H233V188H234V182H235V178H236V174H237V170H238V175H239V177H240V177H241V182H242V188H243V195H244V203H245V211H246V220H247V230H248V228H249V219H250V210H251V201H252V194H253V187H254V181H255V175H256V176H257V170H258V171H259V173H260V178H261V183H262V189H263V196H264V204H265V213H266V222H267V231H268V227H269V218H270V209H271V200H272V192H273V186H274V180H275V175H276V172H277V174H278V173H279V175H280V178H281V184H282V190H283V197H284V205H285V214H286V223H287V231H288V225H289V216H290V207H291V199H292V191H293V185H294V179H295V177H296V173H297V170H298V172H299V173H300V179H301V185H302V191H303V199H304V207H305V216H306V225H307V231H308V224H309V215H310V206H311V198H312V190H313V184H314V179H315V178H316V172H317V171H318V175H319V176H320V180H321V185H322V192H323V200H324V208H325V217H326V227H327V232H328V222H329V213H330V204H331V196H332V189H333V183H334V178H335V173H336V173H337V171H338V175H339V178H340V181H341V186H342V193H343V201H344V210H345V219H346V228H347V230H348V221H349V212H350V203H351V195H352V188H353V182H354V179H355V176H356V172H357V172H358V175H359V180H360V182H361V188H362V194H363V202H364V211H365V220H366V230H367V229H368V219H369V210H370V202H371V194H372V187H373V181H374V177H375V174H376V171H377V174H378V172H379V178H380V182H381V189H382V196H383V204H384V212H385V222H386V231H387V227H388V218H389V209H390V200H391V193H392V186H393V180H394V175H395V176H396V169H397V170H398V172H399V178H400V183H401V190H402V197H403V205H404V214H405V223H406V231H407V226H408V216H409V207H410V199H411V192H412V185H413V180H414V175H415V176H416V170H417V175H418V178H419V179H420V184H421V191H422V198H423V206H424V215H425V225H426V232H427V224H428V215H429V206H430V198H431V190H432V184H433V179H434V175H435V175H436V171H437V176H438V176H439V180H440V185H441V192H442V199H443V208H444V217H445V226H446V232H447V223H448V214H449V205H450V197H451V189H452V183H453V178H454V175H455V175H456V169H457V173H458V178H459V181H460V186H461V193H462V201H463V209H464V218H465V228H466V231H467V221H468V212H469V203H470V195H471V188H472V182H473V178H474V174H475V172H476V174H477V173H478V177H479V181H480V187H481V194H482V202H483V211H484V220H485V229H486V229H487V220H488V211H489V202H490V194H491V187H492V181H493V178H494V175H495V170H496V171H497V174H498V176H499V182H500V188H501V195H502V203H503V212H504V221H505V231H506V228H507V218H508V209H509V201H510V193H511V186H512V181H513V176H514V175H515V172H516V171H517V177H518V178H519V183H520V189H521V197H522V205H523V214H524V223H525V232H526V226H527V217H528V208H529V199H530V192H531V185H532V180H533V175H534V176H535V169H536V172H537V177H538V179H539V184H540V190H541V198H542V206H543V215H544V224H545V232H546V225H547V215H548V206H549V198H550V191H551V184H552V179H553V173H554V172H555V169H556V174H557V177H558V180H559V185H560V192H561V199H562V207H563V216H564V226H565V231H566V223H567V214H568V205H569V197H570V190H571V183H572V176H573V172H574V174H575V173H576V173H577V174H578V180H579V186H580V193H581V200H582V209H583V218H584V227H585V231H586V222H587V212H588V204H589V196H590V189H591V182H592V180H593V174H594V171H595V174H596V174H597V178H598V181H599V187H600V194H601V202H602V210H603V219H604V229H605V230H606V220H607V211H608V202H609V194H610V188H611V182H612V176H613V175H614V170H615V173H616V177H617V180H618V182H619V188H620V195H621V203H622V212H623V221H624V230H625V228H626V219H627V210H628V201H629V193H630V186H631V181H632V176H633V174H634V171H635V172H636V177H637V177H638V183H639V189H640V196H641V204H642V213H643V222H644V232H645V227H646V217H647V208H648V200H649V192H650V185H651V180H652V174H653V176H654V170H655V172H656V174H657V179H658V184H659V190H660V198H661V206H662V215H663V224H664V231H665V225H666V216H667V207H668V199H669V191H670V185H671V179H672V177H673V174H674V169H675V173H676V173H677V179H678V185H679V191H680V199H681V207H682V216H683V225H684V231H685V223H686V214H687V205H688V197H689V190H690V184H691V178H692V175H693V175H694V173H695V175H696V178H697V180H698V186H699V192H700V200H701V209H702V218H703V227H704V231H705V222H706V213H707V204H708V196H709V189H710V183H711V178H712V173H713V172H714V171H715V172H716V178H717V181H718V187H719V194H720V201H721V210H722V219H723V228H724V230H725V220H726V211H727V203H728V195H729V188H730V182H731V177H732V177H733V170H734V171H735V174H736V179H737V182H738V188H739V195H740V203H741V211H742V220H743V230H744V228H745V219H746V210H747V201H748V194H749V187H750V181H751V174H752V171H753V173H754V173H755V175H756V180H757V183H758V189H759V196H760V204H761V213H762V222H763V231H764V227H765V218H766V209H767V200H768V192H769V186H770V180H771V176H772V174H773V171H774V174H775V174H776V178H777V184H778V291H777V298H776V299H775V300H774V306H773V302H772V298H771V295H770V289H769V283H768V275H767V266H766V257H765V248H764V244H763V253H762V262H761V271H760V279H759V286H758V292H757V299H756V301H755V301H754V301H753V304H752V297H751V294H750V288H749V281H748V274H747V265H746V256H745V247H744V245H743V255H742V264H741V272H740V280H739V287H738V293H737V298H736V302H735V300H734V304H733V298H732V296H731V293H730V287H729V280H728V272H727V264H726V255H725V245H724V247H723V256H722V265H721V274H720V281H719V288H718V294H717V299H716V301H715V304H714V305H713V299H712V299H711V292H710V286H709V279H708V271H707V262H706V253H705V244H704V248H703V257H702V266H701V275H700V283H699V289H698V295H697V299H696V299H695V302H694V304H693V301H692V297H691V291H690V285H689V278H688V270H687V261H686V252H685V244H684V250H683V259H682V268H681V276H680V284H679V290H678V296H677V301H676V300H675V305H674V303H673V300H672V296H671V290H670V284H669V276H668V268H667V259H666V250H665V244H664V251H663V260H662V269H661V277H660V285H659V291H658V296H657V302H656V305H655V301H654V304H653V300H652V295H651V290H650V283H649V275H648V267H647V258H646V248H645V243H644V253H643V262H642V271H641V279H640V286H639V292H638V296H637V301H636V305H635V304H634V300H633V297H632V294H631V289H630V282H629V274H628V265H627V256H626V247H625V245H624V254H623V263H622V272H621V280H620V287H619V293H618V296H617V299H616V302H615V304H614V301H613V298H612V293H611V287H610V281H609V273H608V264H607V255H606V245H605V246H604V256H603V265H602V273H601V281H600V288H599V294H598V296H597V302H596V306H595V300H594V300H593V297H592V293H591V286H590V279H589V271H588V263H587V253H586V244H585V248H584V257H583V266H582V275H581V282H580V289H579V295H578V297H577V303H576V306H575V305H574V303H573V299H572V292H571V285H570V278H569V270H568V261H567V252H566V244H565V249H564V259H563V268H562V276H561V283H560V290H559V295H558V300H557V303H556V304H555V303H554V298H553V296H552V291H551V284H550V277H549V269H548V260H547V250H546V243H545V251H544V260H543V269H542V277H541V285H540V291H539V296H538V299H537V302H536V303H535V303H534V301H533V295H532V290H531V283H530V276H529V267H528V258H527V249H526V243H525V252H524V261H523V270H522V278H521V286H520V292H519V296H518V303H517V303H516V302H515V302H514V296H513V294H512V289H511V282H510V274H509V266H508V257H507V247H506V244H505V254H504V263H503V272H502V280H501V287H500V293H499V296H498V303H497V302H496V303H495V299H494V295H493V294H492V288H491V281H490V273H489V264H488V255H487V246H486V246H485V255H484V264H483V273H482V281H481V288H480V294H479V298H478V302H477V306H476V300H475V300H474V297H473V293H472V287H471V280H470V272H469V263H468V254H467V244H466V247H465V257H464V266H463V274H462V282H461V289H460V294H459V300H458V302H457V302H456V300H455V301H454V294H453V292H452V286H451V278H450V270H449V261H448V252H447V243H446V249H445V258H444V267H443V276H442V283H441V290H440V295H439V297H438V299H437V301H436V302H435V298H434V296H433V291H432V285H431V277H430V269H429V260H428V251H427V243H426V250H425V260H424V269H423V277H422V284H421V291H420V296H419V298H418V301H417V304H416V302H415V300H414V295H413V290H412V283H411V276H410V268H409V259H408V249H407V244H406V252H405V261H404V270H403V278H402V285H401V292H400V297H399V301H398V304H397V306H396V302H395V300H394V295H393V289H392V282H391V275H390V266H389V257H388V248H387V244H386V253H385V263H384V271H383V279H382V286H381V293H380V298H379V301H378V304H377V303H376V302H375V298H374V294H373V288H372V281H371V273H370V265H369V256H368V246H367V245H366V255H365V264H364V273H363V281H362V287H361V293H360V296H359V300H358V301H357V305H356V298H355V299H354V293H353V287H352V280H351V272H350V263H349V254H348V245H347V247H346V256H345V265H344V274H343V282H342V289H341V294H340V297H339V299H338V302H337V304H336V301H335V296H334V292H333V286H332V279H331V271H330V262H329V253H328V243H327V248H326V258H325V267H324V275H323V283H322V290H321V295H320V301H319V304H318V303H317V303H316V298H315V296H314V291H313V285H312V277H311V269H310V260H309V251H308V244H307V250H306V259H305V268H304V276H303V284H302V290H301V296H300V300H299V303H298V302H297V301H296V302H295V296H294V290H293V284H292V276H291V268H290V259H289V250H288V244H287V252H286V261H285V270H284V278H283V285H282V291H281V294H280V297H279V301H278V304H277V301H276V299H275V295H274V289H273V283H272V275H271V266H270V257H269V248H268V244H267V253H266V262H265V271H264V279H263V286H262V292H261V296H260V303H259V303H258V303H257V303H256V296H255V294H254V288H253V281H252V274H251V265H250V256H249V247H248V245H247V255H246V264H245V272H244V280H243V287H242V293H241V299H240V300H239V305H238V303H237V301H236V298H235V293H234V287H233V280H232V272H231V264H230V255H229V245H228V247H227V256H226V265H225V274H224V281H223V288H222V294H221V300H220V301H219V306H218V303H217V298H216V294H215V292H214V286H213V279H212V271H211V262H210V253H209V244H208V248H207V257H206V266H205V275H204V283H203V289H202V295H201V299H200V301H199V302H198V303H197V297H196V296H195V291H194V285H193V278H192V270H191V261H190V252H189V244H188V250H187V259H186V268H185V276H184V284H183V290H182V296H181V301H180V303H179V303H178V300H177V302H176V296H175V290H174V284H173V276H172V268H171V259H170V250H169V244H168V251H167V260H166V269H165V277H164V285H163V291H162V296H161V298H160V301H159V303H158V302H157V298H156V295H155V290H154V283H153V275H152V267H151V258H150V248H149V243H148V253H147V262H146V271H145V279H144V286H143V292H142V297H141V302H140V301H139V301H138V299H137V299H136V294H135V289H134V282H133V274H132V265H131V256H130V247H129V245H128V254H127V263H126V272H125V280H124V287H123V293H122V297H121V302H120V303H119V301H118V303H117V297H116V293H115V287H114V281H113V273H112V264H111V255H110V245H109V246H108V256H107V265H106V273H105V281H104V288H103V294H102V295H101V300H100V303H99V305H98V298H97V294H96V293H95V286H94V279H93V271H92V263H91V253H90V244H89V248H88V257H87V266H86V275H85V282H84V289H83V295H82V299H81V299H80V305H79V301H78V301H77V294H76V292H75V285H74V278H73V270H72V261H71V252H70V244H69V249H68V259H67V268H66V276H65V283H64V290H63V295H62V300H61V300H60V304H59V300H58V298H57V296H56V291H55V284H54V277H53V269H52V260H51V250H50V243H49V251H48V260H47V269H46V277H45V285H44V291H43V296H42V297H41V302H40V304H39V299H38V300H37V295H36V290H35V283H34V276H33V267H32V258H31V249H30V243H29V252H28V261H27V270H26V278H25V286H24V292H23V295H22Z" fill="#e60000" filter="url(#sb)"/></g>
<g fill="#e6e632"><rect x="22" y="331" width="1" height="2"/><rect x="23" y="331" width="1" height="2"/><rect x="24" y="331" width="1" height="2"/><rect x="25" y="331" width="1" height="2"/><rect x="26" y="331" width="1" height="2"/><rect x="27" y="331" width="1" height="2"/><rect x="28" y="331" width="1" height="2"/><rect x="29" y="331" width="1" height="3"/><rect x="30" y="331" width="1" height="2"/><rect x="31" y="331" width="1" height="2"/><rect x="32" y="331" width="1" height="3"/><rect x="33" y="331" width="1" height="2"/><rect x="34" y="331" width="1" height="2"/><rect x="35" y="331" width="1" height="2"/><rect x="36" y="331" width="1" height="2"/><rect x="37" y="331" width="1" height="2"/><rect x="38" y="331" width="1" height="2"/><rect x="39" y="331" width="1" height="2"/><rect x="40" y="331" width="1" height="2"/><rect x="41" y="331" width="1" height="2"/><rect x="42" y="331" width="1" height="3"/><rect x="43" y="331" width="1" height="2"/><rect x="44" y="331" width="1" height="2"/><rect x="45" y="331" width="1" height="2"/><rect x="46" y="331" width="1" height="2"/><rect x="47" y="331" width="1" height="2"/><rect x="48" y="331" width="1" height="2"/><rect x="49" y="331" width="1" height="2"/><rect x="50" y="331" width="1" height="2"/><rect x="51" y="331" width="1" height="2"/><rect x="52" y="331" width="1" height="2"/><rect x="53" y="331" width="1" height="2"/><rect x="54" y="331" width="1" height="2"/><rect x="55" y="331" width="1" height="2"/><rect x="56" y="331" width="1" height="3"/><rect x="57" y="332" width="1" height="2"/><rect x="58" y="332" width="1" height="2"/><rect x="59" y="332" width="1" height="3"/><rect x="60" y="332" width="1" height="3"/><rect x="61" y="333" width="1" height="3"/><rect x="62" y="333" width="1" height="3"/><rect x="63" y="334" width="1" height="3"/><rect x="64" y="335" width="1" height="3"/><rect x="65" y="336" width="1" height="4"/><rect x="66" y="337" width="1" height="4"/><rect x="67" y="338" width="1" height="5"/><rect x="68" y="340" width="1" height="5"/><rect x="69" y="342" width="1" height="6"/><rect x="70" y="344" width="1" height="6"/><rect x="71" y="347" width="1" height="6"/><rect x="72" y="349" width="1" height="7"/><rect x="73" y="352" width="1" height="7"/><rect x="74" y="355" width="1" height="8"/><rect x="75" y="359" width="1" height="7"/><rect x="76" y="362" width="1" height="8"/><rect x="77" y="366" width="1" height="7"/><rect x="78" y="369" width="1" height="7"/><rect x="79" y="373" width="1" height="7"/><rect x="80" y="376" width="1" height="6"/><rect x="81" y="379" width="1" height="6"/><rect x="82" y="381" width="1" height="6"/><rect x="83" y="383" width="1" height="5"/><rect x="84" y="385" width="1" height="4"/><rect x="85" y="386" width="1" height="3"/><rect x="86" y="387" width="1" height="2"/><rect x="87" y="386" width="1" height="3"/><rect x="88" y="384" width="1" height="4"/><rect x="89" y="382" width="1" height="5"/><rect x="90" y="380" width="1" height="5"/><rect x="91" y="377" width="1" height="6"/><rect x="92" y="374" width="1" height="7"/><rect x="93" y="371" width="1" height="7"/><rect x="94" y="367" width="1" height="8"/><rect x="95" y="364" width="1" height="7"/><rect x="96" y="360" width="1" height="8"/><rect x="97" y="357" width="1" height="7"/><rect x="98" y="353" width="1" height="8"/><rect x="99" y="350" width="1" height="7"/><rect x="100" y="348" width="1" height="6"/><rect x="101" y="345" width="1" height="6"/><rect x="102" y="343" width="1" height="6"/><rect x="103" y="341" width="1" height="5"/><rect x="104" y="339" width="1" height="5"/><rect x="105" y="338" width="1" height="4"/><rect x="106" y="336" width="1" height="4"/><rect x="107" y="335" width="1" height="4"/><rect x="108" y="334" width="1" height="4"/><rect x="109" y="334" width="1" height="3"/><rect x="110" y="333" width="1" height="3"/><rect x="111" y="332" width="1" height="3"/><rect x="112" y="332" width="1" height="3"/><rect x="113" y="332" width="1" height="2"/><rect x="114" y="332" width="1" height="2"/><rect x="115" y="331" width="1" height="4"/><rect x="116" y="331" width="1" height="4"/><rect x="117" y="331" width="1" height="3"/><rect x="118" y="331" width="1" height="3"/><rect x="119" y="331" width="1" height="3"/><rect x="120" y="331" width="1" height="3"/><rect x="121" y="331" width="1" height="4"/><rect x="122" y="331" width="1" height="3"/><rect x="123" y="331" width="1" height="3"/><rect x="124" y="331" width="1" height="3"/><rect x="125" y="331" width="1" height="4"/><rect x="126" y="331" width="1" height="4"/><rect x="127" y="331" width="1" height="4"/><rect x="128" y="331" width="1" height="4"/><rect x="129" y="331" width="1" height="4"/><rect x="130" y="331" width="1" height="4"/><rect x="131" y="331" width="1" height="3"/><rect x="132" y="331" width="1" height="3"/><rect x="133" y="331" width="1" height="3"/><rect x="134" y="331" width="1" height="4"/><rect x="135" y="331" width="1" height="3"/><rect x="136" y="331" width="1" height="3"/><rect x="137" y="331" width="1" height="4"/><rect x="138" y="331" width="1" height="3"/><rect x="139" y="331" width="1" height="3"/><rect x="140" y="331" width="1" height="4"/><rect x="141" y="331" width="1" height="3"/><rect x="142" y="331" width="1" height="4"/><rect x="143" y="331" width="1" height="3"/><rect x="144" y="331" width="1" height="3"/><rect x="145" y="331" width="1" height="3"/><rect x="146" y="331" width="1" height="4"/><rect x="147" y="331" width="1" height="4"/><rect x="148" y="331" width="1" height="3"/><rect x="149" y="331" width="1" height="4"/><rect x="150" y="331" width="1" height="4"/><rect x="151" y="331" width="1" height="4"/><rect x="152" y="331" width="1" height="3"/><rect x="153" y="331" width="1" height="4"/><rect x="154" y="331" width="1" height="3"/><rect x="155" y="331" width="1" height="4"/><rect x="156" y="331" width="1" height="4"/><rect x="157" y="331" width="1" height="4"/><rect x="158" y="331" width="1" height="3"/><rect x="159" y="331" width="1" height="3"/><rect x="160" y="331" width="1" height="4"/><rect x="161" y="331" width="1" height="3"/><rect x="162" y="331" width="1" height="3"/><rect x="163" y="331" width="1" height="3"/><rect x="164" y="331" width="1" height="4"/><rect x="165" y="331" width="1" height="4"/><rect x="166" y="331" width="1" height="4"/><rect x="167" y="331" width="1" height="3"/><rect x="168" y="331" width="1" height="4"/><rect x="169" y="331" width="1" height="4"/><rect x="170" y="331" width="1" height="4"/><rect x="171" y="331" width="1" height="3"/><rect x="172" y="331" width="1" height="3"/><rect x="173" y="331" width="1" height="4"/><rect x="174" y="331" width="1" height="4"/><rect x="175" y="331" width="1" height="3"/><rect x="176" y="331" width="1" height="3"/><rect x="177" y="331" width="1" height="3"/><rect x="178" y="331" width="1" height="4"/><rect x="179" y="331" width="1" height="4"/><rect x="180" y="331" width="1" height="3"/><rect x="181" y="331" width="1" height="4"/><rect x="182" y="331" width="1" height="4"/><rect x="183" y="331" width="1" height="3"/><rect x="184" y="331" width="1" height="3"/><rect x="185" y="331" width="1" height="3"/><rect x="186" y="331" width="1" height="4"/><rect x="187" y="331" width="1" height="3"/><rect x="188" y="331" width="1" height="4"/><rect x="189" y="331" width="1" height="3"/><rect x="190" y="331" width="1" height="3"/><rect x="191" y="331" width="1" height="4"/><rect x="192" y="331" width="1" height="3"/><rect x="193" y="331" width="1" height="3"/><rect x="194" y="331" width="1" height="4"/><rect x="195" y="331" width="1" height="4"/><rect x="196" y="331" width="1" height="3"/><rect x="197" y="331" width="1" height="4"/><rect x="198" y="331" width="1" height="4"/><rect x="199" y="331" width="1" height="4"/><rect x="200" y="331" width="1" height="4"/><rect x="201" y="331" width="1" height="4"/><rect x="202" y="331" width="1" height="4"/><rect x="203" y="331" width="1" height="4"/><rect x="204" y="331" width="1" height="3"/><rect x="205" y="331" width="1" height="4"/><rect x="206" y="331" width="1" height="3"/><rect x="207" y="331" width="1" height="4"/><rect x="208" y="331" width="1" height="4"/><rect x="209" y="331" width="1" height="4"/><rect x="210" y="331" width="1" height="4"/><rect x="211" y="331" width="1" height="4"/><rect x="212" y="331" width="1" height="3"/><rect x="213" y="331" width="1" height="3"/><rect x="214" y="331" width="1" height="4"/><rect x="215" y="331" width="1" height="3"/><rect x="216" y="331" width="1" height="3"/><rect x="217" y="331" width="1" height="4"/><rect x="218" y="331" width="1" height="3"/><rect x="219" y="331" width="1" height="4"/><rect x="220" y="331" width="1" height="3"/><rect x="221" y="331" width="1" height="3"/><rect x="222" y="331" width="1" height="4"/><rect x="223" y="331" width="1" height="3"/><rect x="224" y="331" width="1" height="3"/><rect x="225" y="331" width="1" height="3"/><rect x="226" y="331" width="1" height="4"/><rect x="227" y="331" width="1" height="3"/><rect x="228" y="331" width="1" height="3"/><rect x="229" y="331" width="1" height="3"/><rect x="230" y="331" width="1" height="4"/><rect x="231" y="331" width="1" height="4"/><rect x="232" y="331" width="1" height="4"/><rect x="233" y="331" width="1" height="4"/><rect x="234" y="331" width="1" height="4"/><rect x="235" y="331" width="1" height="3"/><rect x="236" y="331" width="1" height="4"/><rect x="237" y="331" width="1" height="2"/><rect x="238" y="331" width="1" height="3"/><rect x="239" y="331" width="1" height="2"/><rect x="240" y="331" width="1" height="2"/><rect x="241" y="331" width="1" height="2"/><rect x="242" y="331" width="1" height="2"/><rect x="243" y="331" width="1" height="2"/><rect x="244" y="331" width="1" height="2"/><rect x="245" y="331" width="1" height="2"/><rect x="246" y="331" width="1" height="2"/><rect x="247" y="331" width="1" height="2"/><rect x="248" y="331" width="1" height="2"/><rect x="249" y="331" width="1" height="2"/><rect x="250" y="331" width="1" height="2"/><rect x="251" y="331" width="1" height="2"/><rect x="252" y="331" width="1" height="2"/><rect x="253" y="331" width="1" height="2"/><rect x="254" y="331" width="1" height="3"/><rect x="255" y="331" width="1" height="3"/><rect x="256" y="332" width="1" height="2"/><rect x="257" y="332" width="1" height="2"/><rect x="258" y="332" width="1" height="3"/><rect x="259" y="333" width="1" height="2"/><rect x="260" y="333" width="1" height="3"/><rect x="261" y="334" width="1" height="3"/><rect x="262" y="334" width="1" height="4"/><rect x="263" y="335" width="1" height="4"/><rect x="264" y="336" width="1" height="4"/><rect x="265" y="338" width="1" height="4"/><rect x="266" y="339" width="1" height="5"/><rect x="267" y="341" width="1" height="5"/><rect x="268" y="343" width="1" height="6"/><rect x="269" y="345" width="1" height="6"/><rect x="270" y="348" width="1" height="6"/><rect x="271" y="350" width="1" height="7"/><rect x="272" y="353" width="1" height="7"/><rect x="273" y="356" width="1" height="8"/><rect x="274" y="360" width="1" height="7"/><rect x="275" y="363" width="1" height="7"/><rect x="276" y="366" width="1" height="8"/><rect x="277" y="370" width="1" height="7"/><rect x="278" y="373" width="1" height="7"/><rect x="279" y="376" width="1" height="6"/><rect x="280" y="379" width="1" height="5"/><rect x="281" y="381" width="1" height="5"/><rect x="282" y="383" width="1" height="4"/><rect x="283" y="384" width="1" height="3"/><rect x="284" y="385" width="1" height="2"/><rect x="285" y="384" width="1" height="3"/><rect x="286" y="383" width="1" height="4"/><rect x="287" y="381" width="1" height="5"/><rect x="288" y="379" width="1" height="5"/><rect x="289" y="376" width="1" height="6"/><rect x="290" y="374" width="1" height="6"/><rect x="291" y="370" width="1" height="7"/><rect x="292" y="367" width="1" height="7"/><rect x="293" y="364" width="1" height="7"/><rect x="294" y="360" width="1" height="8"/><rect x="295" y="357" width="1" height="7"/><rect x="296" y="354" width="1" height="7"/><rect x="297" y="351" width="1" height="7"/><rect x="298" y="348" width="1" height="7"/><rect x="299" y="346" width="1" height="6"/><rect x="300" y="343" width="1" height="6"/><rect x="301" y="341" width="1" height="6"/><rect x="302" y="339" width="1" height="5"/><rect x="303" y="338" width="1" height="4"/><rect x="304" y="337" width="1" height="4"/><rect x="305" y="335" width="1" height="4"/><rect x="306" y="334" width="1" height="4"/><rect x="307" y="334" width="1" height="3"/><rect x="308" y="333" width="1" height="3"/><rect x="309" y="333" width="1" height="2"/><rect x="310" y="332" width="1" height="3"/><rect x="311" y="332" width="1" height="2"/><rect x="312" y="332" width="1" height="2"/><rect x="313" y="331" width="1" height="3"/><rect x="314" y="331" width="1" height="5"/><rect x="315" y="331" width="1" height="4"/><rect x="316" y="331" width="1" height="3"/><rect x="317" y="331" width="1" height="3"/><rect x="318" y="331" width="1" height="4"/><rect x="319" y="331" width="1" height="3"/><rect x="320" y="331" width="1" height="4"/><rect x="321" y="331" width="1" height="4"/><rect x="322" y="331" width="1" height="4"/><rect x="323" y="331" width="1" height="4"/><rect x="324" y="331" width="1" height="4"/><rect x="325" y="331" width="1" height="4"/><rect x="326" y="331" width="1" height="4"/><rect x="327" y="331" width="1" height="4"/><rect x="328" y="331" width="1" height="3"/><rect x="329" y="331" width="1" height="3"/><rect x="330" y="331" width="1" height="3"/><rect x="331" y="331" width="1" height="3"/><rect x="332" y="331" width="1" height="3"/><rect x="333" y="331" width="1" height="3"/><rect x="334" y="331" width="1" height="4"/><rect x="335" y="331" width="1" height="4"/><rect x="336" y="331" width="1" height="3"/><rect x="337" y="331" width="1" height="4"/><rect x="338" y="331" width="1" height="3"/><rect x="339" y="331" width="1" height="3"/><rect x="340" y="331" width="1" height="4"/><rect x="341" y="331" width="1" height="3"/><rect x="342" y="331" width="1" height="3"/><rect x="343" y="331" width="1" height="3"/><rect x="344" y="331" width="1" height="3"/><rect x="345" y="331" width="1" height="3"/><rect x="346" y="331" width="1" height="4"/><rect x="347" y="331" width="1" height="3"/><rect x="348" y="331" width="1" height="3"/><rect x="349" y="331" width="1" height="3"/><rect x="350" y="331" width="1" height="3"/><rect x="351" y="331" width="1" height="3"/><rect x="352" y="331" width="1" height="3"/><rect x="353" y="331" width="1" height="3"/><rect x="354" y="331" width="1" height="3"/><rect x="355" y="331" width="1" height="3"/><rect x="356" y="331" width="1" height="4"/><rect x="357" y="331" width="1" height="4"/><rect x="358" y="331" width="1" height="4"/><rect x="359" y="331" width="1" height="4"/><rect x="360" y="331" width="1" height="4"/><rect x="361" y="331" width="1" height="3"/><rect x="362" y="331" width="1" height="3"/><rect x="363" y="331" width="1" height="3"/><rect x="364" y="331" width="1" height="3"/><rect x="365" y="331" width="1" height="3"/><rect x="366" y="331" width="1" height="3"/><rect x="367" y="331" width="1" height="4"/><rect x="368" y="331" width="1" height="3"/><rect x="369" y="331" width="1" height="3"/><rect x="370" y="331" width="1" height="3"/><rect x="371" y="331" width="1" height="3"/><rect x="372" y="331" width="1" height="3"/><rect x="373" y="331" width="1" height="4"/><rect x="374" y="331" width="1" height="3"/><rect x="375" y="331" width="1" height="4"/><rect x="376" y="331" width="1" height="4"/><rect x="377" y="331" width="1" height="4"/><rect x="378" y="331" width="1" height="3"/><rect x="379" y="331" width="1" height="4"/><rect x="380" y="331" width="1" height="3"/><rect x="381" y="331" width="1" height="3"/><rect x="382" y="331" width="1" height="3"/><rect x="383" y="331" width="1" height="4"/><rect x="384" y="331" width="1" height="3"/><rect x="385" y="331" width="1" height="3"/><rect x="386" y="331" width="1" height="3"/><rect x="387" y="331" width="1" height="3"/><rect x="388" y="331" width="1" height="3"/><rect x="389" y="331" width="1" height="4"/><rect x="390" y="331" width="1" height="4"/><rect x="391" y="331" width="1" height="4"/><rect x="392" y="331" width="1" height="3"/><rect x="393" y="331" width="1" height="4"/><rect x="394" y="331" width="1" height="3"/><rect x="395" y="331" width="1" height="4"/><rect x="396" y="331" width="1" height="4"/><rect x="397" y="331" width="1" height="4"/><rect x="398" y="331" width="1" height="3"/><rect x="399" y="331" width="1" height="3"/><rect x="400" y="331" width="1" height="3"/><rect x="401" y="331" width="1" height="4"/><rect x="402" y="331" width="1" height="3"/><rect x="403" y="331" width="1" height="3"/><rect x="404" y="331" width="1" height="3"/><rect x="405" y="331" width="1" height="4"/><rect x="406" y="331" width="1" height="3"/><rect x="407" y="331" width="1" height="4"/><rect x="408" y="331" width="1" height="3"/><rect x="409" y="331" width="1" height="3"/><rect x="410" y="331" width="1" height="4"/><rect x="411" y="331" width="1" height="3"/><rect x="412" y="331" width="1" height="3"/><rect x="413" y="331" width="1" height="3"/><rect x="414" y="331" width="1" height="4"/><rect x="415" y="331" width="1" height="4"/><rect x="416" y="331" width="1" height="4"/><rect x="417" y="331" width="1" height="3"/><rect x="418" y="331" width="1" height="4"/><rect x="419" y="331" width="1" height="3"/><rect x="420" y="331" width="1" height="4"/><rect x="421" y="331" width="1" height="3"/><rect x="422" y="331" width="1" height="3"/><rect x="423" y="331" width="1" height="4"/><rect x="424" y="331" width="1" height="3"/><rect x="425" y="331" width="1" height="3"/><rect x="426" y="331" width="1" height="3"/><rect x="427" y="331" width="1" height="3"/><rect x="428" y="331" width="1" height="4"/><rect x="429" y="331" width="1" height="3"/><rect x="430" y="331" width="1" height="3"/><rect x="431" y="331" width="1" height="4"/><rect x="432" y="331" width="1" height="4"/><rect x="433" y="331" width="1" height="3"/><rect x="434" y="331" width="1" height="3"/><rect x="435" y="331" width="1" height="2"/><rect x="436" y="331" width="1" height="3"/><rect x="437" y="331" width="1" height="2"/><rect x="438" y="331" width="1" height="2"/><rect x="439" y="331" width="1" height="2"/><rect x="440" y="331" width="1" height="3"/><rect x="441" y="331" width="1" height="2"/><rect x="442" y="331" width="1" height="2"/><rect x="443" y="331" width="1" height="3"/><rect x="444" y="331" width="1" height="2"/><rect x="445" y="331" width="1" height="2"/><rect x="446" y="331" width="1" height="2"/><rect x="447" y="331" width="1" height="2"/><rect x="448" y="331" width="1" height="2"/><rect x="449" y="331" width="1" height="2"/><rect x="450" y="331" width="1" height="2"/><rect x="451" y="331" width="1" height="2"/><rect x="452" y="331" width="1" height="2"/><rect x="453" y="331" width="1" height="3"/><rect x="454" y="332" width="1" height="2"/><rect x="455" y="332" width="1" height="2"/><rect x="456" y="332" width="1" height="3"/><rect x="457" y="332" width="1" height="3"/><rect x="458" y="333" width="1" height="3"/><rect x="459" y="333" width="1" height="3"/><rect x="460" y="334" width="1" height="3"/><rect x="461" y="335" width="1" height="3"/><rect x="462" y="336" width="1" height="4"/><rect x="463" y="337" width="1" height="4"/><rect x="464" y="338" width="1" height="5"/><rect x="465" y="340" width="1" height="5"/><rect x="466" y="342" width="1" height="5"/><rect x="467" y="344" width="1" height="6"/><rect x="468" y="346" width="1" height="7"/><rect x="469" y="349" width="1" height="7"/><rect x="470" y="352" width="1" height="7"/><rect x="471" y="355" width="1" height="7"/><rect x="472" y="358" width="1" height="7"/><rect x="473" y="361" width="1" height="8"/><rect x="474" y="365" width="1" height="7"/><rect x="475" y="368" width="1" height="7"/><rect x="476" y="371" width="1" height="7"/><rect x="477" y="374" width="1" height="7"/><rect x="478" y="377" width="1" height="6"/><rect x="479" y="379" width="1" height="5"/><rect x="480" y="381" width="1" height="5"/><rect x="481" y="383" width="1" height="3"/><rect x="482" y="384" width="1" height="2"/><rect x="483" y="384" width="1" height="2"/><rect x="484" y="383" width="1" height="3"/><rect x="485" y="381" width="1" height="5"/><rect x="486" y="379" width="1" height="5"/><rect x="487" y="377" width="1" height="6"/><rect x="488" y="374" width="1" height="7"/><rect x="489" y="371" width="1" height="7"/><rect x="490" y="368" width="1" height="7"/><rect x="491" y="365" width="1" height="7"/><rect x="492" y="361" width="1" height="8"/><rect x="493" y="358" width="1" height="7"/><rect x="494" y="355" width="1" height="7"/><rect x="495" y="352" width="1" height="7"/><rect x="496" y="349" width="1" height="7"/><rect x="497" y="346" width="1" height="7"/><rect x="498" y="344" width="1" height="6"/><rect x="499" y="342" width="1" height="5"/><rect x="500" y="340" width="1" height="5"/><rect x="501" y="338" width="1" height="5"/><rect x="502" y="337" width="1" height="4"/><rect x="503" y="336" width="1" height="4"/><rect x="504" y="335" width="1" height="3"/><rect x="505" y="334" width="1" height="3"/><rect x="506" y="333" width="1" height="3"/><rect x="507" y="333" width="1" height="3"/><rect x="508" y="332" width="1" height="3"/><rect x="509" y="332" width="1" height="3"/><rect x="510" y="332" width="1" height="2"/><rect x="511" y="332" width="1" height="2"/><rect x="512" y="331" width="1" height="5"/><rect x="513" y="331" width="1" height="4"/><rect x="514" y="331" width="1" height="4"/><rect x="515" y="331" width="1" height="3"/><rect x="516" y="331" width="1" height="4"/><rect x="517" y="331" width="1" height="3"/><rect x="518" y="331" width="1" height="4"/><rect x="519" y="331" width="1" height="4"/><rect x="520" y="331" width="1" height="3"/><rect x="521" y="331" width="1" height="4"/><rect x="522" y="331" width="1" height="4"/><rect x="523" y="331" width="1" height="3"/><rect x="524" y="331" width="1" height="3"/><rect x="525" y="331" width="1" height="3"/><rect x="526" y="331" width="1" height="3"/><rect x="527" y="331" width="1" height="3"/><rect x="528" y="331" width="1" height="3"/><rect x="529" y="331" width="1" height="3"/><rect x="530" y="331" width="1" height="3"/><rect x="531" y="331" width="1" height="4"/><rect x="532" y="331" width="1" height="3"/><rect x="533" y="331" width="1" height="3"/><rect x="534" y="331" width="1" height="3"/><rect x="535" y="331" width="1" height="3"/><rect x="536" y="331" width="1" height="4"/><rect x="537" y="331" width="1" height="4"/><rect x="538" y="331" width="1" height="3"/><rect x="539" y="331" width="1" height="4"/><rect x="540" y="331" width="1" height="3"/><rect x="541" y="331" width="1" height="4"/><rect x="542" y="331" width="1" height="4"/><rect x="543" y="331" width="1" height="3"/><rect x="544" y="331" width="1" height="3"/><rect x="545" y="331" width="1" height="4"/><rect x="546" y="331" width="1" height="3"/><rect x="547" y="331" width="1" height="4"/><rect x="548" y="331" width="1" height="3"/><rect x="549" y="331" width="1" height="4"/><rect x="550" y="331" width="1" height="4"/><rect x="551" y="331" width="1" height="4"/><rect x="552" y="331" width="1" height="4"/><rect x="553" y="331" width="1" height="3"/><rect x="554" y="331" width="1" height="3"/><rect x="555" y="331" width="1" height="4"/><rect x="556" y="331" width="1" height="3"/><rect x="557" y="331" width="1" height="3"/><rect x="558" y="331" width="1" height="4"/><rect x="559" y="331" width="1" height="4"/><rect x="560" y="331" width="1" height="4"/><rect x="561" y="331" width="1" height="4"/><rect x="562" y="331" width="1" height="4"/><rect x="563" y="331" width="1" height="4"/><rect x="564" y="331" width="1" height="4"/><rect x="565" y="331" width="1" height="4"/><rect x="566" y="331" width="1" height="3"/><rect x="567" y="331" width="1" height="3"/><rect x="568" y="331" width="1" height="3"/><rect x="569" y="331" width="1" height="4"/><rect x="570" y="331" width="1" height="4"/><rect x="571" y="331" width="1" height="3"/><rect x="572" y="331" width="1" height="4"/><rect x="573" y="331" width="1" height="4"/><rect x="574" y="331" width="1" height="4"/><rect x="575" y="331" width="1" height="4"/><rect x="576" y="331" width="1" height="3"/><rect x="577" y="331" width="1" height="4"/><rect x="578" y="331" width="1" height="3"/><rect x="579" y="331" width="1" height="3"/><rect x="580" y="331" width="1" height="3"/><rect x="581" y="331" width="1" height="4"/><rect x="582" y="331" width="1" height="4"/><rect x="583" y="331" width="1" height="4"/><rect x="584" y="331" width="1" height="4"/><rect x="585" y="331" width="1" height="4"/><rect x="586" y="331" width="1" height="3"/><rect x="587" y="331" width="1" height="3"/><rect x="588" y="331" width="1" height="3"/><rect x="589" y="331" width="1" height="4"/><rect x="590" y="331" width="1" height="4"/><rect x="591" y="331" width="1" height="3"/><rect x="592" y="331" width="1" height="3"/><rect x="593" y="331" width="1" height="3"/><rect x="594" y="331" width="1" height="3"/><rect x="595" y="331" width="1" height="4"/><rect x="596" y="331" width="1" height="4"/><rect x="597" y="331" width="1" height="3"/><rect x="598" y="331" width="1" height="3"/><rect x="599" y="331" width="1" height="3"/><rect x="600" y="331" width="1" height="3"/><rect x="601" y="331" width="1" height="4"/><rect x="602" y="331" width="1" height="4"/><rect x="603" y="331" width="1" height="4"/><rect x="604" y="331" width="1" height="3"/><rect x="605" y="331" width="1" height="3"/><rect x="606" y="331" width="1" height="3"/><rect x="607" y="331" width="1" height="3"/><rect x="608" y="331" width="1" height="3"/><rect x="609" y="331" width="1" height="3"/><rect x="610" y="331" width="1" height="3"/><rect x="611" y="331" width="1" height="3"/><rect x="612" y="331" width="1" height="4"/><rect x="613" y="331" width="1" height="3"/><rect x="614" y="331" width="1" height="4"/><rect x="615" y="331" width="1" height="3"/><rect x="616" y="331" width="1" height="3"/><rect x="617" y="331" width="1" height="4"/><rect x="618" y="331" width="1" height="4"/><rect x="619" y="331" width="1" height="4"/><rect x="620" y="331" width="1" height="3"/><rect x="621" y="331" width="1" height="3"/><rect x="622" y="331" width="1" height="4"/><rect x="623" y="331" width="1" height="4"/><rect x="624" y="331" width="1" height="3"/><rect x="625" y="331" width="1" height="3"/><rect x="626" y="331" width="1" height="4"/><rect x="627" y="331" width="1" height="4"/><rect x="628" y="331" width="1" height="3"/><rect x="629" y="331" width="1" height="4"/><rect x="630" y="331" width="1" height="4"/><rect x="631" y="331" width="1" height="3"/><rect x="632" y="331" width="1" height="3"/><rect x="633" y="331" width="1" height="2"/><rect x="634" y="331" width="1" height="2"/><rect x="635" y="331" width="1" height="2"/><rect x="636" y="331" width="1" height="2"/><rect x="637" y="331" width="1" height="2"/><rect x="638" y="331" width="1" height="2"/><rect x="639" y="331" width="1" height="2"/><rect x="640" y="331" width="1" height="2"/><rect x="641" y="331" width="1" height="3"/><rect x="642" y="331" width="1" height="2"/><rect x="643" y="331" width="1" height="2"/><rect x="644" y="331" width="1" height="2"/><rect x="645" y="331" width="1" height="2"/><rect x="646" y="331" width="1" height="2"/><rect x="647" y="331" width="1" height="2"/><rect x="648" y="331" width="1" height="2"/><rect x="649" y="331" width="1" height="3"/><rect x="650" y="331" width="1" height="2"/><rect x="651" y="331" width="1" height="3"/><rect x="652" y="332" width="1" height="2"/><rect x="653" y="332" width="1" height="2"/><rect x="654" y="332" width="1" height="3"/><rect x="655" y="332" width="1" height="3"/><rect x="656" y="333" width="1" height="3"/><rect x="657" y="333" width="1" height="3"/><rect x="658" y="334" width="1" height="3"/><rect x="659" y="335" width="1" height="3"/><rect x="660" y="336" width="1" height="4"/><rect x="661" y="337" width="1" height="4"/><rect x="662" y="338" width="1" height="5"/><rect x="663" y="340" width="1" height="5"/><rect x="664" y="342" width="1" height="5"/><rect x="665" y="344" width="1" height="6"/><rect x="666" y="346" width="1" height="7"/><rect x="667" y="349" width="1" height="7"/><rect x="668" y="352" width="1" height="7"/><rect x="669" y="355" width="1" height="7"/><rect x="670" y="358" width="1" height="7"/><rect x="671" y="361" width="1" height="8"/><rect x="672" y="365" width="1" height="7"/><rect x="673" y="368" width="1" height="7"/><rect x="674" y="371" width="1" height="7"/><rect x="675" y="374" width="1" height="7"/><rect x="676" y="377" width="1" height="6"/><rect x="677" y="379" width="1" height="5"/><rect x="678" y="381" width="1" height="5"/><rect x="679" y="383" width="1" height="3"/><rect x="680" y="384" width="1" height="2"/><rect x="681" y="384" width="1" height="2"/><rect x="682" y="383" width="1" height="3"/><rect x="683" y="381" width="1" height="5"/><rect x="684" y="379" width="1" height="5"/><rect x="685" y="377" width="1" height="6"/><rect x="686" y="374" width="1" height="7"/><rect x="687" y="371" width="1" height="7"/><rect x="688" y="368" width="1" height="7"/><rect x="689" y="365" width="1" height="7"/><rect x="690" y="361" width="1" height="8"/><rect x="691" y="358" width="1" height="7"/><rect x="692" y="355" width="1" height="7"/><rect x="693" y="352" width="1" height="7"/><rect x="694" y="349" width="1" height="7"/><rect x="695" y="346" width="1" height="7"/><rect x="696" y="344" width="1" height="6"/><rect x="697" y="342" width="1" height="5"/><rect x="698" y="340" width="1" height="5"/><rect x="699" y="338" width="1" height="5"/><rect x="700" y="337" width="1" height="4"/><rect x="701" y="336" width="1" height="4"/><rect x="702" y="335" width="1" height="3"/><rect x="703" y="334" width="1" height="3"/><rect x="704" y="333" width="1" height="3"/><rect x="705" y="333" width="1" height="3"/><rect x="706" y="332" width="1" height="3"/><rect x="707" y="332" width="1" height="3"/><rect x="708" y="332" width="1" height="2"/><rect x="709" y="332" width="1" height="2"/><rect x="710" y="331" width="1" height="4"/><rect x="711" y="331" width="1" height="4"/><rect x="712" y="331" width="1" height="3"/><rect x="713" y="331" width="1" height="3"/><rect x="714" y="331" width="1" height="3"/><rect x="715" y="331" width="1" height="4"/><rect x="716" y="331" width="1" height="3"/><rect x="717" y="331" width="1" height="4"/><rect x="718" y="331" width="1" height="3"/><rect x="719" y="331" width="1" height="4"/><rect x="720" y="331" width="1" height="4"/><rect x="721" y="331" width="1" height="3"/><rect x="722" y="331" width="1" height="4"/><rect x="723" y="331" width="1" height="3"/><rect x="724" y="331" width="1" height="3"/><rect x="725" y="331" width="1" height="4"/><rect x="726" y="331" width="1" height="4"/><rect x="727" y="331" width="1" height="4"/><rect x="728" y="331" width="1" height="3"/><rect x="729" y="331" width="1" height="3"/><rect x="730" y="331" width="1" height="4"/><rect x="731" y="331" width="1" height="4"/><rect x="732" y="331" width="1" height="4"/><rect x="733" y="331" width="1" height="3"/><rect x="734" y="331" width="1" height="4"/><rect x="735" y="331" width="1" height="4"/><rect x="736" y="331" width="1" height="4"/><rect x="737" y="331" width="1" height="4"/><rect x="738" y="331" width="1" height="3"/><rect x="739" y="331" width="1" height="3"/><rect x="740" y="331" width="1" height="3"/><rect x="741" y="331" width="1" height="3"/><rect x="742" y="331" width="1" height="3"/><rect x="743" y="331" width="1" height="4"/><rect x="744" y="331" width="1" height="4"/><rect x="745" y="331" width="1" height="3"/><rect x="746" y="331" width="1" height="3"/><rect x="747" y="331" width="1" height="4"/><rect x="748" y="331" width="1" height="3"/><rect x="749" y="331" width="1" height="4"/><rect x="750" y="331" width="1" height="4"/><rect x="751" y="331" width="1" height="4"/><rect x="752" y="331" width="1" height="4"/><rect x="753" y="331" width="1" height="4"/><rect x="754" y="331" width="1" height="4"/><rect x="755" y="331" width="1" height="4"/><rect x="756" y="331" width="1" height="3"/><rect x="757" y="331" width="1" height="4"/><rect x="758" y="331" width="1" height="3"/><rect x="759" y="331" width="1" height="4"/><rect x="760" y="331" width="1" height="4"/><rect x="761" y="331" width="1" height="3"/><rect x="762" y="331" width="1" height="3"/><rect x="763" y="331" width="1" height="4"/><rect x="764" y="331" width="1" height="4"/><rect x="765" y="331" width="1" height="3"/><rect x="766" y="331" width="1" height="4"/><rect x="767" y="331" width="1" height="3"/><rect x="768" y="331" width="1" height="4"/><rect x="769" y="331" width="1" height="4"/><rect x="770" y="331" width="1" height="3"/><rect x="771" y="331" width="1" height="4"/><rect x="772" y="331" width="1" height="4"/><rect x="773" y="331" width="1" height="3"/><rect x="774" y="331" width="1" height="3"/><rect x="775" y="331" width="1" height="4"/><rect x="776" y="331" width="1" height="4"/><rect x="777" y="331" width="1" height="4"/></g>
</svg>

<!-- bottom-left panel -->
<div class="a" style="left:0;top:598px;width:320px;height:2px;background:#74b0ac"></div>
<div class="a" style="left:318px;top:519px;width:2px;height:81px;background:#62aac8"></div>
<div class="a" style="left:209px;top:519px;width:2px;height:41px;background:#4aa0d0"></div>
<div class="a" style="left:2px;top:538px;width:207px;height:3px;background:#1c6cb4"></div>
<div class="a" style="left:2px;top:559px;width:316px;height:2px;background:#78b0c0"></div>
<div class="a" style="left:2px;top:520px;width:207px;height:19px;background:#000;border-radius:3px 5px 5px 3px"></div>
<div class="a" style="left:2px;top:540px;width:207px;height:19px;background:#000;border-radius:3px 5px 5px 3px"></div>
<div class="a" style="left:2px;top:561px;width:316px;height:18px;background:#000;border-radius:3px 5px 5px 3px"></div>
<div class="a" style="left:211px;top:520px;width:107px;height:39px;background:#000;border-radius:6px"></div>
<div class="circ" style="left:2.5px;top:521.7px;background:#e60000">1</div>
<div class="circ" style="left:2.5px;top:542px;background:#e6e620">2</div>
<div class="circ" style="left:1.5px;top:562px;background:#e60000">1</div>
<div class="t" style="left:18px;top:525px;color:#d81818">1VBW-</div>
<div class="t" style="left:105.5px;top:525px;color:#d81818">0.64div</div>
<div class="t" style="left:18px;top:545px;color:#e6e632">1VBW-</div>
<div class="t" style="left:105.5px;top:545px;color:#e6e632">-3.32div</div>
<div class="t" style="left:20px;top:564px;color:#d81818">Vp:2.640v</div>
<div class="t" style="left:224.5px;top:523px;color:#fff">(10KS/s)</div>
<div class="t" style="left:218px;top:543px;color:#fff">Depth:10K</div>

<!-- M pill -->
<div class="pill" style="left:320px;top:520px;width:98px;height:18px"></div>
<div class="t" style="left:337.5px;top:523px;color:#fff">M:50ms</div>
<!-- menu bar -->
<div class="a" style="left:320px;top:538px;width:480px;height:60px;background:#0060a0"></div>
<div class="a" style="left:320px;top:598px;width:480px;height:2px;background:#0078d4"></div>
<div class="btn" style="left:323px;top:541px;width:89px;height:56px"></div>
<div class="btn" style="left:598px;top:541px;width:89px;height:56px"></div>
<div class="t" style="left:345.5px;top:551px;color:#081858;-webkit-text-stroke:0.22px #0080e0">Type</div>
<div class="a" style="left:341px;top:571px;width:50px;height:20px;background:#e8e8e8"></div>
<div class="t" style="left:341px;top:574px;color:#000;-webkit-text-stroke:0.22px #e8e8e8">Image</div>
<div class="t" style="left:620px;top:563px;color:#081858;-webkit-text-stroke:0.22px #0080e0">Save</div>
<!-- trigger pill -->
<div class="pill" style="left:665px;top:520px;width:129px;height:18px"></div>
<div class="circ" style="left:667px;top:521px;background:#e60000">1</div>
<div class="t" style="left:707px;top:524px;color:#fff">2.00V</div>
<svg class="a" style="left:0;top:0" width="800" height="600" viewBox="0 0 800 600">
<!-- shields -->
<g fill="#000" stroke="#9628d8" stroke-width="1.4">
<path d="M395.5,21 H407.5 V31.5 L401.5,34.5 L395.5,31.5 Z"/>
<path d="M564.5,4 Q564.5,3 565.5,3 H575.5 Q576.5,3 576.5,4 V14 L570.5,17 L564.5,14 Z"/>
</g>
<g fill="#d050ff" font-family="Liberation Sans, sans-serif" font-weight="bold" text-anchor="middle" style="letter-spacing:0">
<text x="401.5" y="32" font-size="11.5">T</text>
<text x="570.5" y="14.2" font-size="11.5">T</text>
<text x="401" y="7" font-size="7.5" fill="#e000e0">T</text>
</g>
<!-- ch markers -->
<path d="M0,229.5 H15 L19.5,238 L15,246.5 H0 Z" fill="#000" stroke="#e01010" stroke-width="1"/>
<path d="M0,427.5 H15 L19.5,436 L15,444.5 H0 Z" fill="#000" stroke="#e6e632" stroke-width="1"/>
<text x="4" y="243.2" font-family="Liberation Sans, sans-serif" font-weight="bold" font-size="14" fill="#e81010" style="letter-spacing:0">1</text>
<text x="3.5" y="441.2" font-family="Liberation Sans, sans-serif" font-size="14" fill="#e6e632" style="letter-spacing:0">2</text>
<!-- trigger marker -->
<path d="M781,137.5 L794,131.5 V143.5 Z" fill="#a020e0"/>
<!-- usb icon -->
<path d="M756,3 L763,3.5 L761.5,6 L764,8.5 L761,10 L759.5,7.5 L756.5,9 Z" fill="#22b822"/>
<path d="M758,11 L765.5,7.5 L768,12 L760.5,15.5 Z" fill="#b8a8d8" stroke="#6a6a90" stroke-width="0.8"/>
<rect x="761" y="10.5" width="4" height="2" fill="#403060" transform="rotate(-25 763 11.5)"/>
<!-- trigger edge -->
<path d="M685.5,535.5 H692 L696.5,522.5 H704.5" fill="none" stroke="#fff" stroke-width="1.3"/>
</svg>
</body></html>
